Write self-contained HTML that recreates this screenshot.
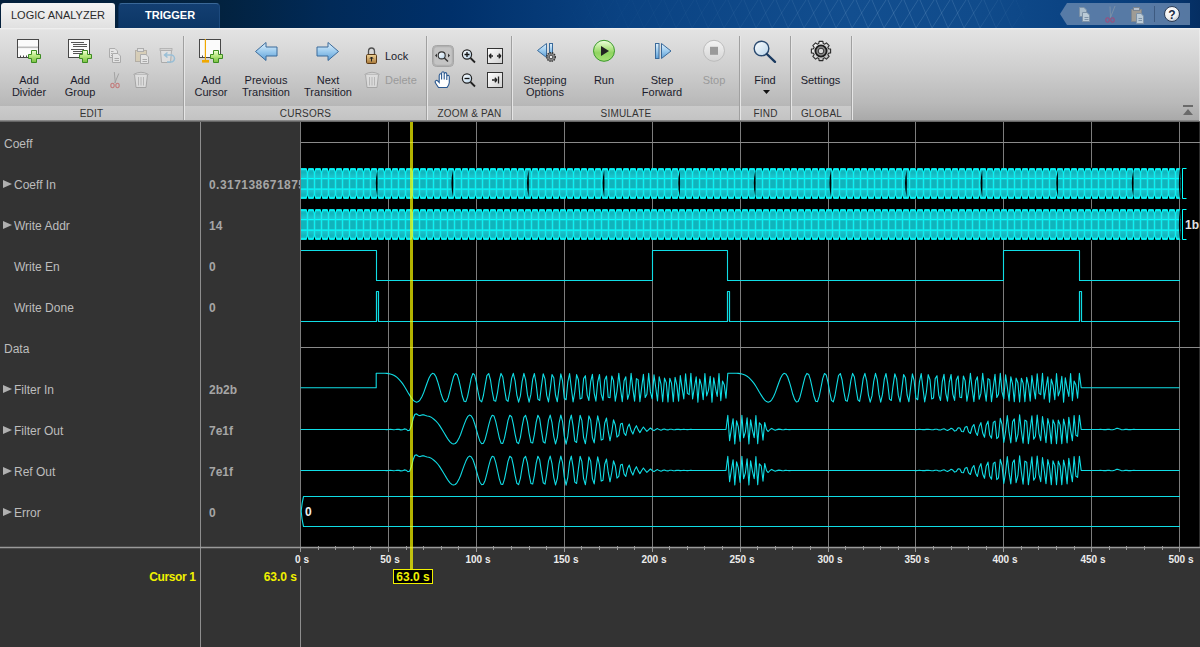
<!DOCTYPE html>
<html><head><meta charset="utf-8">
<style>
*{margin:0;padding:0;box-sizing:border-box}
html,body{width:1200px;height:647px;overflow:hidden;background:#333}
body{position:relative;font-family:"Liberation Sans",sans-serif}
.abs{position:absolute}
#tabbar{position:absolute;left:0;top:0;width:1200px;height:28px;
 background:linear-gradient(90deg,#04203c 0px,#02223f 220px,#012a58 330px,#00306a 450px,#0a4282 620px,#124e8f 850px,#104b8b 980px,#0b4484 1060px,#083c78 1150px,#052e62 1200px)}
#tab1{position:absolute;left:1px;top:3px;width:114px;height:26px;background:linear-gradient(#f4f4f4,#e0e0e0);border-radius:3px 3px 0 0;
 font-size:11px;color:#2a2a2a;line-height:15px;padding:5px 0 0 10px;white-space:nowrap}
#tab2{position:absolute;left:118px;top:3px;width:102px;height:25px;background:linear-gradient(#133f72,#0c3666);border-radius:4px 4px 0 0;border-top:1px solid #3a6898;border-left:1px solid #0a2f5a;border-right:1px solid #1d4a7e;
 font-size:11px;font-weight:bold;color:#fff;line-height:15px;padding:4px 0 0 26px;white-space:nowrap}
#qab{position:absolute;left:1060px;top:3px;width:130px;height:22px}
#strip{position:absolute;left:0;top:28px;width:1200px;height:93px;
 background:linear-gradient(#f2f2f2 0px,#e3e3e3 2px,#cfcfcf 40px,#b9b9b9 75px,#a9a9a9 92px)}
#stripbot{position:absolute;left:0;top:120px;width:1200px;height:2px;background:linear-gradient(#9a9a9a,#555)}
.band{position:absolute;top:106px;height:14px;background:linear-gradient(#cbcbcb,#c3c3c3);
 font-size:10px;letter-spacing:0.2px;color:#333;text-align:center;line-height:14px;padding-top:1px}
.sep{position:absolute;top:36px;width:2px;height:84px;border-left:1px solid #a0a0a0;border-right:1px solid #e6e6e6}
.bt{position:absolute;font-size:11px;color:#1c1c2c;line-height:12px;text-align:center;white-space:nowrap}
.dis{color:#9a9a9a}
#left{position:absolute;left:0;top:122px;width:300px;height:525px;background:#333}
#wave{position:absolute;left:301px;top:122px;width:899px;height:425px;background:#000}
.lbl{position:absolute;font-size:12px;color:#bdbdbd;line-height:16px;white-space:nowrap}
.val{position:absolute;left:209px;width:91px;overflow:hidden;font-size:12px;font-weight:bold;color:#a6a6a6;line-height:16px;white-space:nowrap}
.tri{position:absolute;left:3px;width:0;height:0;border-left:9px solid #b0b0b0;border-top:4.5px solid transparent;border-bottom:4.5px solid transparent}
.tl{position:absolute;top:553px;width:60px;text-align:center;font-size:10px;font-weight:bold;color:#ececec;line-height:13px}
</style></head>
<body>
<div id="tabbar"></div>
<svg class="abs" style="left:0;top:0" width="1200" height="28">
<defs><linearGradient id="meshfade" x1="0" y1="0" x2="1" y2="0">
<stop offset="0.45" stop-color="#fff" stop-opacity="0"/>
<stop offset="0.6" stop-color="#fff" stop-opacity="0.3"/>
<stop offset="0.74" stop-color="#fff" stop-opacity="1"/>
<stop offset="0.8" stop-color="#fff" stop-opacity="0.9"/>
<stop offset="0.86" stop-color="#fff" stop-opacity="0"/>
</linearGradient>
<mask id="mm"><rect x="0" y="0" width="1200" height="28" fill="url(#meshfade)"/></mask></defs>
<g stroke="#8fb4dc" stroke-opacity="0.22" stroke-width="1" mask="url(#mm)">
<line x1="340.0" y1="28" x2="358.0" y2="0"/>
<line x1="340.0" y1="28" x2="328.0" y2="0"/>
<line x1="356.0" y1="28" x2="374.0" y2="0"/>
<line x1="356.0" y1="28" x2="344.0" y2="0"/>
<line x1="372.0" y1="28" x2="390.0" y2="0"/>
<line x1="372.0" y1="28" x2="360.0" y2="0"/>
<line x1="388.0" y1="28" x2="406.0" y2="0"/>
<line x1="388.0" y1="28" x2="376.0" y2="0"/>
<line x1="404.0" y1="28" x2="422.0" y2="0"/>
<line x1="404.0" y1="28" x2="392.0" y2="0"/>
<line x1="420.0" y1="28" x2="438.0" y2="0"/>
<line x1="420.0" y1="28" x2="408.0" y2="0"/>
<line x1="436.0" y1="28" x2="454.0" y2="0"/>
<line x1="436.0" y1="28" x2="424.0" y2="0"/>
<line x1="452.0" y1="28" x2="470.0" y2="0"/>
<line x1="452.0" y1="28" x2="440.0" y2="0"/>
<line x1="468.0" y1="28" x2="486.0" y2="0"/>
<line x1="468.0" y1="28" x2="456.0" y2="0"/>
<line x1="484.0" y1="28" x2="502.0" y2="0"/>
<line x1="484.0" y1="28" x2="472.0" y2="0"/>
<line x1="500.0" y1="28" x2="518.0" y2="0"/>
<line x1="500.0" y1="28" x2="488.0" y2="0"/>
<line x1="516.0" y1="28" x2="534.0" y2="0"/>
<line x1="516.0" y1="28" x2="504.0" y2="0"/>
<line x1="532.0" y1="28" x2="550.0" y2="0"/>
<line x1="532.0" y1="28" x2="520.0" y2="0"/>
<line x1="548.0" y1="28" x2="566.0" y2="0"/>
<line x1="548.0" y1="28" x2="536.0" y2="0"/>
<line x1="564.0" y1="28" x2="582.0" y2="0"/>
<line x1="564.0" y1="28" x2="552.0" y2="0"/>
<line x1="580.0" y1="28" x2="598.0" y2="0"/>
<line x1="580.0" y1="28" x2="568.0" y2="0"/>
<line x1="596.0" y1="28" x2="614.0" y2="0"/>
<line x1="596.0" y1="28" x2="584.0" y2="0"/>
<line x1="612.0" y1="28" x2="630.0" y2="0"/>
<line x1="612.0" y1="28" x2="600.0" y2="0"/>
<line x1="628.0" y1="28" x2="646.0" y2="0"/>
<line x1="628.0" y1="28" x2="616.0" y2="0"/>
<line x1="644.0" y1="28" x2="662.0" y2="0"/>
<line x1="644.0" y1="28" x2="632.0" y2="0"/>
<line x1="660.0" y1="28" x2="678.0" y2="0"/>
<line x1="660.0" y1="28" x2="648.0" y2="0"/>
<line x1="676.0" y1="28" x2="694.0" y2="0"/>
<line x1="676.0" y1="28" x2="664.0" y2="0"/>
<line x1="692.0" y1="28" x2="710.0" y2="0"/>
<line x1="692.0" y1="28" x2="680.0" y2="0"/>
<line x1="708.0" y1="28" x2="726.0" y2="0"/>
<line x1="708.0" y1="28" x2="696.0" y2="0"/>
<line x1="724.0" y1="28" x2="742.0" y2="0"/>
<line x1="724.0" y1="28" x2="712.0" y2="0"/>
<line x1="740.0" y1="28" x2="758.0" y2="0"/>
<line x1="740.0" y1="28" x2="728.0" y2="0"/>
<line x1="756.0" y1="28" x2="774.0" y2="0"/>
<line x1="756.0" y1="28" x2="744.0" y2="0"/>
<line x1="772.0" y1="28" x2="790.0" y2="0"/>
<line x1="772.0" y1="28" x2="760.0" y2="0"/>
<line x1="788.0" y1="28" x2="806.0" y2="0"/>
<line x1="788.0" y1="28" x2="776.0" y2="0"/>
<line x1="804.0" y1="28" x2="822.0" y2="0"/>
<line x1="804.0" y1="28" x2="792.0" y2="0"/>
<line x1="820.0" y1="28" x2="838.0" y2="0"/>
<line x1="820.0" y1="28" x2="808.0" y2="0"/>
<line x1="836.0" y1="28" x2="854.0" y2="0"/>
<line x1="836.0" y1="28" x2="824.0" y2="0"/>
<line x1="852.0" y1="28" x2="870.0" y2="0"/>
<line x1="852.0" y1="28" x2="840.0" y2="0"/>
<line x1="868.0" y1="28" x2="886.0" y2="0"/>
<line x1="868.0" y1="28" x2="856.0" y2="0"/>
<line x1="884.0" y1="28" x2="902.0" y2="0"/>
<line x1="884.0" y1="28" x2="872.0" y2="0"/>
<line x1="900.0" y1="28" x2="918.0" y2="0"/>
<line x1="900.0" y1="28" x2="888.0" y2="0"/>
<line x1="916.0" y1="28" x2="934.0" y2="0"/>
<line x1="916.0" y1="28" x2="904.0" y2="0"/>
<line x1="932.0" y1="28" x2="950.0" y2="0"/>
<line x1="932.0" y1="28" x2="920.0" y2="0"/>
<line x1="948.0" y1="28" x2="966.0" y2="0"/>
<line x1="948.0" y1="28" x2="936.0" y2="0"/>
<line x1="964.0" y1="28" x2="982.0" y2="0"/>
<line x1="964.0" y1="28" x2="952.0" y2="0"/>
<line x1="980.0" y1="28" x2="998.0" y2="0"/>
<line x1="980.0" y1="28" x2="968.0" y2="0"/>
<line x1="996.0" y1="28" x2="1014.0" y2="0"/>
<line x1="996.0" y1="28" x2="984.0" y2="0"/>
<line x1="1012.0" y1="28" x2="1030.0" y2="0"/>
<line x1="1012.0" y1="28" x2="1000.0" y2="0"/>
<line x1="1028.0" y1="28" x2="1046.0" y2="0"/>
<line x1="1028.0" y1="28" x2="1016.0" y2="0"/>
<line x1="1044.0" y1="28" x2="1062.0" y2="0"/>
<line x1="1044.0" y1="28" x2="1032.0" y2="0"/>
<line x1="1060.0" y1="28" x2="1078.0" y2="0"/>
<line x1="1060.0" y1="28" x2="1048.0" y2="0"/>
<line x1="1076.0" y1="28" x2="1094.0" y2="0"/>
<line x1="1076.0" y1="28" x2="1064.0" y2="0"/>
<line x1="1092.0" y1="28" x2="1110.0" y2="0"/>
<line x1="1092.0" y1="28" x2="1080.0" y2="0"/>
<line x1="1108.0" y1="28" x2="1126.0" y2="0"/>
<line x1="1108.0" y1="28" x2="1096.0" y2="0"/>
<line x1="1124.0" y1="28" x2="1142.0" y2="0"/>
<line x1="1124.0" y1="28" x2="1112.0" y2="0"/>
<line x1="1140.0" y1="28" x2="1158.0" y2="0"/>
<line x1="1140.0" y1="28" x2="1128.0" y2="0"/>
<line x1="1156.0" y1="28" x2="1174.0" y2="0"/>
<line x1="1156.0" y1="28" x2="1144.0" y2="0"/>
<line x1="1172.0" y1="28" x2="1190.0" y2="0"/>
<line x1="1172.0" y1="28" x2="1160.0" y2="0"/>
<line x1="1188.0" y1="28" x2="1206.0" y2="0"/>
<line x1="1188.0" y1="28" x2="1176.0" y2="0"/>
<line x1="1204.0" y1="28" x2="1222.0" y2="0"/>
<line x1="1204.0" y1="28" x2="1192.0" y2="0"/>
<line x1="1220.0" y1="28" x2="1238.0" y2="0"/>
<line x1="1220.0" y1="28" x2="1208.0" y2="0"/>
<line x1="1236.0" y1="28" x2="1254.0" y2="0"/>
<line x1="1236.0" y1="28" x2="1224.0" y2="0"/>
<line x1="1252.0" y1="28" x2="1270.0" y2="0"/>
<line x1="1252.0" y1="28" x2="1240.0" y2="0"/>
<line x1="1268.0" y1="28" x2="1286.0" y2="0"/>
<line x1="1268.0" y1="28" x2="1256.0" y2="0"/>
<line x1="1284.0" y1="28" x2="1302.0" y2="0"/>
<line x1="1284.0" y1="28" x2="1272.0" y2="0"/>
<line x1="1300.0" y1="28" x2="1318.0" y2="0"/>
<line x1="1300.0" y1="28" x2="1288.0" y2="0"/>
<line x1="1316.0" y1="28" x2="1334.0" y2="0"/>
<line x1="1316.0" y1="28" x2="1304.0" y2="0"/>
<line x1="1332.0" y1="28" x2="1350.0" y2="0"/>
<line x1="1332.0" y1="28" x2="1320.0" y2="0"/>
<line x1="1348.0" y1="28" x2="1366.0" y2="0"/>
<line x1="1348.0" y1="28" x2="1336.0" y2="0"/>
<line x1="1364.0" y1="28" x2="1382.0" y2="0"/>
<line x1="1364.0" y1="28" x2="1352.0" y2="0"/>
<line x1="1380.0" y1="28" x2="1398.0" y2="0"/>
<line x1="1380.0" y1="28" x2="1368.0" y2="0"/>
<line x1="1396.0" y1="28" x2="1414.0" y2="0"/>
<line x1="1396.0" y1="28" x2="1384.0" y2="0"/>
<line x1="1412.0" y1="28" x2="1430.0" y2="0"/>
<line x1="1412.0" y1="28" x2="1400.0" y2="0"/>
<line x1="1428.0" y1="28" x2="1446.0" y2="0"/>
<line x1="1428.0" y1="28" x2="1416.0" y2="0"/>
<line x1="1444.0" y1="28" x2="1462.0" y2="0"/>
<line x1="1444.0" y1="28" x2="1432.0" y2="0"/>
</g></svg>
<div id="tab1">LOGIC ANALYZER</div>
<div id="tab2">TRIGGER</div>
<div id="qab">
<svg width="130" height="22" viewBox="0 0 130 22">
<path d="M7,0 H130 V22 H7 L0,11 Z" fill="#6585ad" fill-opacity="0.85"/>
<line x1="94.5" y1="3" x2="94.5" y2="19" stroke="#3d5a80" stroke-width="1"/>
<g opacity="0.75">
<path d="M19.5,4.5 H24 L26.5,7 V13.5 H19.5 Z" fill="#c8d4d8" stroke="#8a9aa8"/>
<path d="M22.5,9.5 H27 L29.5,12 V18.5 H22.5 Z" fill="#dde6e8" stroke="#8a9aa8"/>
<path d="M24.5,14.5 H28.5 M24.5,16.5 H28.5" stroke="#8a9aa8"/>
<path d="M55,3 L50.5,14.5 M50,3.5 L50.5,14.5" stroke="#8a9aa8" stroke-width="0.9"/>
<ellipse cx="47.5" cy="17" rx="1.7" ry="2.2" fill="none" stroke="#b04070" stroke-width="1.1"/>
<ellipse cx="52.5" cy="17" rx="1.7" ry="2.2" fill="none" stroke="#b04070" stroke-width="1.1"/>
<rect x="71.5" y="6.5" width="10" height="12" fill="#b8a890" stroke="#8a8a8a"/>
<rect x="73.5" y="4.5" width="6" height="3" fill="#d8d8d8" stroke="#8a8a8a"/>
<path d="M76.5,10.5 H81 L83.5,13 V20.5 H76.5 Z" fill="#dde6e8" stroke="#8a9aa8"/>
<path d="M78.5,15.5 H82 M78.5,17.5 H82" stroke="#8a9aa8"/>
</g>
<defs><radialGradient id="ghelp" cx="0.4" cy="0.3" r="0.8"><stop offset="0" stop-color="#ffffff"/><stop offset="0.6" stop-color="#f0f0f0"/><stop offset="1" stop-color="#a8b4c4"/></radialGradient></defs><circle cx="112" cy="11" r="7.5" fill="url(#ghelp)" stroke="#2b3b55" stroke-width="1"/>
<text x="112" y="15.5" font-family="Liberation Sans" font-weight="bold" font-size="12" text-anchor="middle" fill="#1a2a44">?</text>
</svg>
</div>

<div id="strip"></div>
<div id="stripbot"></div>
<div class="abs" style="left:1199px;top:28px;width:1px;height:93px;background:linear-gradient(#eee,#ccc)"></div>
<div class="band" style="left:0;width:183px">EDIT</div>
<div class="band" style="left:185px;width:241px">CURSORS</div>
<div class="band" style="left:428px;width:83px">ZOOM &amp; PAN</div>
<div class="band" style="left:513px;width:226px">SIMULATE</div>
<div class="band" style="left:741px;width:49px">FIND</div>
<div class="band" style="left:792px;width:59px">GLOBAL</div>
<div class="sep" style="left:183px"></div>
<div class="sep" style="left:426px"></div>
<div class="sep" style="left:511px"></div>
<div class="sep" style="left:739px"></div>
<div class="sep" style="left:790px"></div>
<div class="sep" style="left:851px"></div>

<div class="bt" style="left:9px;top:74px;width:40px">Add<br>Divider</div>
<div class="bt" style="left:60px;top:74px;width:40px">Add<br>Group</div>
<div class="bt" style="left:191px;top:74px;width:40px">Add<br>Cursor</div>
<div class="bt" style="left:236px;top:74px;width:60px">Previous<br>Transition</div>
<div class="bt" style="left:298px;top:74px;width:60px">Next<br>Transition</div>
<div class="bt" style="left:385px;top:50px;text-align:left">Lock</div>
<div class="bt dis" style="left:385px;top:74px;text-align:left">Delete</div>
<div class="bt" style="left:515px;top:74px;width:60px">Stepping<br>Options</div>
<div class="bt" style="left:584px;top:74px;width:40px">Run</div>
<div class="bt" style="left:632px;top:74px;width:60px">Step<br>Forward</div>
<div class="bt dis" style="left:694px;top:74px;width:40px">Stop</div>
<div class="bt" style="left:745px;top:74px;width:40px">Find</div>
<div class="bt" style="left:790px;top:74px;width:61px">Settings</div>
<svg class="abs" style="left:0;top:0" width="1200" height="122" viewBox="0 0 1200 122">
<defs>
<linearGradient id="gplus" x1="0" y1="0" x2="0" y2="1"><stop offset="0" stop-color="#f4ffd8"/><stop offset="0.45" stop-color="#b8e880"/><stop offset="1" stop-color="#78c040"/></linearGradient>
<linearGradient id="garrow" x1="0" y1="0" x2="0" y2="1"><stop offset="0" stop-color="#e4f2fc"/><stop offset="0.5" stop-color="#9ccbee"/><stop offset="1" stop-color="#5c9ed6"/></linearGradient>
<linearGradient id="grun" x1="0" y1="0" x2="0" y2="1"><stop offset="0" stop-color="#f0ffe0"/><stop offset="0.35" stop-color="#b8e890"/><stop offset="0.6" stop-color="#90d460"/><stop offset="1" stop-color="#a8e078"/></linearGradient>
<linearGradient id="gstop" x1="0" y1="0" x2="0" y2="1"><stop offset="0" stop-color="#f4f4f4"/><stop offset="1" stop-color="#d4d4d4"/></linearGradient>
<linearGradient id="glock" x1="0" y1="0" x2="0" y2="1"><stop offset="0" stop-color="#f0d498"/><stop offset="1" stop-color="#a87838"/></linearGradient>
<linearGradient id="gsel" x1="0" y1="0" x2="0" y2="1"><stop offset="0" stop-color="#a8a8a8"/><stop offset="1" stop-color="#d8d8d8"/></linearGradient>
<linearGradient id="ggear" x1="0" y1="0" x2="1" y2="1"><stop offset="0" stop-color="#ffffff"/><stop offset="1" stop-color="#b0b0b0"/></linearGradient>
<linearGradient id="gbox" x1="0" y1="0" x2="1" y2="1"><stop offset="0" stop-color="#ffffff"/><stop offset="1" stop-color="#d0d0d0"/></linearGradient>
<linearGradient id="glens" x1="0" y1="0" x2="1" y2="1"><stop offset="0" stop-color="#ffffff"/><stop offset="1" stop-color="#b8d4ea"/></linearGradient>
<g id="plus"><path d="M2.5,0.5 H7.5 V5.5 H12.5 V10.5 H7.5 V12.5 H2.5 V10.5 H0.5 V5.5 H2.5 Z" transform="translate(-0.0,0)" fill="url(#gplus)" stroke="#3c8c22" stroke-width="1"/></g>
</defs>
<!-- EDIT -->
<g>
<rect x="17.5" y="39.5" width="21" height="18" fill="#fbfbfb" stroke="#474747" stroke-width="1"/>
<rect x="18" y="46.5" width="20" height="1.6" fill="#bdbdbd"/>
<path d="M20.5,57.5 V55.5 M23.5,57.5 V55.5 M26.5,57.5 V55.5" stroke="#474747" stroke-width="1"/>
<path d="M31.5,50.5 H36.5 V54.5 H40.5 V58.5 H36.5 V62.5 H31.5 V58.5 H28.5 V54.5 H31.5 Z" fill="url(#gplus)" stroke="#3c8c22" stroke-width="1"/>
</g>
<g>
<rect x="68.5" y="39.5" width="21" height="18" fill="#fbfbfb" stroke="#474747" stroke-width="1"/>
<path d="M71,42.5 H84 M73,44.5 H87 M73,46.5 H87 M71,49.5 H84 M73,51.5 H83 M73,53.5 H83" stroke="#555" stroke-width="1"/>
<path d="M82.5,50.5 H87.5 V54.5 H91.5 V58.5 H87.5 V62.5 H82.5 V58.5 H79.5 V54.5 H82.5 Z" fill="url(#gplus)" stroke="#3c8c22" stroke-width="1"/>
</g>
<g opacity="0.55">
<path d="M109.5,48.5 H115 L117.5,51 V57.5 H109.5 Z" fill="#f2f2f2" stroke="#8a8a8a"/>
<path d="M112.5,53.5 H118 L120.5,56 V62.5 H112.5 Z" fill="#f2f2f2" stroke="#8a8a8a"/>
<path d="M114.5,58.5 H119 M114.5,60.5 H119 M111,51.5 H113.5 M111,53.5 H112 M111,55.5 H112" stroke="#8a8a8a"/>
<rect x="135.5" y="50.5" width="11" height="11" fill="#d8c8a0" stroke="#9a9080"/>
<rect x="137.5" y="48.5" width="6" height="3" fill="#e8e8e8" stroke="#8a8a8a"/>
<path d="M140.5,54.5 H146 L148.5,57 V63.5 H140.5 Z" fill="#f2f2f2" stroke="#8a8a8a"/>
<path d="M142.5,59.5 H147 M142.5,61.5 H147" stroke="#8a8a8a"/>
<path d="M160.5,50.5 H171.5 L170.5,62.5 H161.5 Z" fill="#e8e8e8" stroke="#8a8a8a"/>
<rect x="160" y="48.5" width="12" height="2" fill="#d0d0d0" stroke="#8a8a8a" stroke-width="0.8"/>
<path d="M165,55 H171 A3.5,3.5 0 0 1 171,62 H167 M167.5,52.5 L164.5,55 L167.5,57.5" fill="none" stroke="#6aaed8" stroke-width="1.5"/>
<path d="M114.3,72 L115.3,83 M118.8,73.5 L114.8,83" stroke="#7a7a7a" stroke-width="0.9"/>
<ellipse cx="112.5" cy="85.5" rx="1.7" ry="2.2" fill="none" stroke="#c04040" stroke-width="1.1"/>
<ellipse cx="117.5" cy="85.5" rx="1.7" ry="2.2" fill="none" stroke="#c04040" stroke-width="1.1"/>
<path d="M134.5,74.5 H147.5 L146,87.5 H136 Z" fill="#efefef" stroke="#8a8a8a"/>
<path d="M133.5,74.5 Q141,70 148.5,74.5" fill="#dcdcdc" stroke="#8a8a8a"/>
<path d="M138.5,77 V85.5 M141,77 V85.5 M143.5,77 V85.5" stroke="#a8a8a8"/>
</g>
<!-- CURSORS -->
<g>
<rect x="199.5" y="39.5" width="21" height="18" fill="#fbfbfb" stroke="#474747" stroke-width="1"/>
<path d="M202.5,57.5 V55.5 M214.5,57.5 V55.5" stroke="#474747" stroke-width="1"/>
<rect x="204.8" y="39" width="1.2" height="22" fill="#f0a800"/>
<rect x="202" y="60" width="7" height="2.6" fill="#f0a800"/>
<path d="M213.5,50.5 H218.5 V54.5 H222.5 V58.5 H218.5 V62.5 H213.5 V58.5 H210.5 V54.5 H213.5 Z" fill="url(#gplus)" stroke="#3c8c22" stroke-width="1"/>
</g>
<path d="M255.5,51.5 L266,42.5 V47 H277 V56 H266 V60.5 Z" fill="url(#garrow)" stroke="#3a6a9a" stroke-width="1" stroke-linejoin="round"/>
<path d="M338.5,51.5 L328,42.5 V47 H317 V56 H328 V60.5 Z" fill="url(#garrow)" stroke="#3a6a9a" stroke-width="1" stroke-linejoin="round"/>
<path d="M368.5,54.5 V51.5 A3,3.5 0 0 1 374.5,51.5 V54.5" fill="none" stroke="#505050" stroke-width="1.3"/>
<rect x="366.5" y="54.5" width="10" height="9" rx="1.2" fill="url(#glock)" stroke="#5a3a18" stroke-width="1"/>
<path d="M371.5,57 V61.5 M370,58.5 L371.5,57 L373,58.5" stroke="#222" stroke-width="1"/>
<g opacity="0.5">
<path d="M365.5,74.5 H378.5 L377,87.5 H367 Z" fill="#efefef" stroke="#8a8a8a"/>
<path d="M364.5,74.5 Q372,70 379.5,74.5" fill="#dcdcdc" stroke="#8a8a8a"/>
<path d="M369.5,77 V85.5 M372,77 V85.5 M374.5,77 V85.5" stroke="#a8a8a8"/>
</g>
<!-- ZOOM & PAN -->
<rect x="432.5" y="45.5" width="21" height="21" rx="4" fill="#c4c4c4" stroke="#a0a0a0" stroke-width="1"/>
<rect x="433.5" y="46.5" width="19" height="19" rx="3.2" fill="none" stroke="#b0b0b0" stroke-width="1.5"/>
<circle cx="441.7" cy="55.4" r="3.5" fill="url(#glens)" stroke="#333" stroke-width="1.1"/>
<path d="M444.3,58 L448,61.5" stroke="#333" stroke-width="1.5"/>
<path d="M435,55.5 L437,53.5 V57.5 Z M450,55.5 L448,53.5 V57.5 Z" fill="#333"/>
<circle cx="467" cy="54.5" r="4.6" fill="url(#glens)" stroke="#222" stroke-width="1.2"/>
<path d="M464.5,54.5 H469.5 M467,52 V57" stroke="#111" stroke-width="1.3"/>
<path d="M470.5,58 L475,62.5" stroke="#222" stroke-width="1.8"/>
<circle cx="467" cy="78.5" r="4.6" fill="url(#glens)" stroke="#222" stroke-width="1.2"/>
<path d="M464.5,78.5 H469.5" stroke="#111" stroke-width="1.3"/>
<path d="M470.5,82 L475,86.5" stroke="#222" stroke-width="1.8"/>
<rect x="487.5" y="48.5" width="15" height="15" fill="url(#gbox)" stroke="#333" stroke-width="1"/>
<path d="M489,56 H493 M489,56 L491.3,53.8 M489,56 L491.3,58.2 M501,56 H497 M501,56 L498.7,53.8 M501,56 L498.7,58.2" stroke="#222" stroke-width="1.3"/>
<rect x="487.5" y="72.5" width="15" height="15" fill="url(#gbox)" stroke="#333" stroke-width="1"/>
<path d="M492,80 H497 M497,80 L494.8,77.8 M497,80 L494.8,82.2 M498.5,76.5 V83.5" stroke="#222" stroke-width="1.3"/>
<path d="M438.5,87.5 L435.8,83.5 Q434.5,81.5 435.8,80.6 Q436.8,80 438,81.2 L439.2,82.5 V75.5 Q439.5,73.8 440.6,73.8 Q441.5,73.8 441.6,75.5 V79.5 V73.2 Q442,71.8 443,71.8 Q444,71.8 444.2,73.2 V79.5 V74 Q444.6,72.6 445.6,72.6 Q446.6,72.6 446.8,74 V80 V76.5 Q447.2,75.3 448.2,75.3 Q449.3,75.5 449.3,77 V82.5 Q449,85.5 447,87.5 Z" fill="#fff" stroke="#2a5890" stroke-width="1.1"/>
<!-- SIMULATE -->
<path d="M546.5,43.5 L537.5,50.5 L546.5,57.5 Z" fill="url(#garrow)" stroke="#3a6a9a" stroke-width="1" stroke-linejoin="round"/>
<rect x="549.5" y="43.5" width="3" height="12" fill="url(#garrow)" stroke="#3a6a9a" stroke-width="1"/>
<circle cx="551" cy="57" r="4.3" fill="#888" stroke="#333" stroke-width="1.4" stroke-dasharray="1.4 0.9"/>
<circle cx="551" cy="57" r="1.8" fill="#eee" stroke="#333" stroke-width="0.8"/>
<circle cx="604" cy="50.8" r="10.5" fill="url(#grun)" stroke="#3a9a2a" stroke-width="1"/>
<path d="M601,46 L609,51 L601,56 Z" fill="#222"/>
<rect x="655.5" y="43.5" width="3.5" height="15" fill="url(#garrow)" stroke="#3a6a9a" stroke-width="1"/>
<path d="M661.5,43.5 L671,51 L661.5,58.5 Z" fill="url(#garrow)" stroke="#3a6a9a" stroke-width="1" stroke-linejoin="round"/>
<circle cx="714" cy="50.8" r="10.5" fill="url(#gstop)" stroke="#bcbcbc" stroke-width="1"/>
<rect x="710" y="46.8" width="8" height="8" fill="#9a9a9a"/>
<!-- FIND -->
<circle cx="761.5" cy="48.5" r="7.3" fill="url(#glens)" stroke="#2a4a70" stroke-width="1.4"/>
<path d="M766.8,54 L775,61.8" stroke="#1a3a60" stroke-width="2.4" stroke-linecap="round"/>
<path d="M763,90 H770 L766.5,94 Z" fill="#111"/>
<!-- GLOBAL -->
<path id="gear" d="M819.09,41.39 L822.91,41.39 L823.18,43.51 L824.76,44.16 L826.44,42.85 L829.15,45.56 L827.84,47.24 L828.49,48.82 L830.61,49.09 L830.61,52.91 L828.49,53.18 L827.84,54.76 L829.15,56.44 L826.44,59.15 L824.76,57.84 L823.18,58.49 L822.91,60.61 L819.09,60.61 L818.82,58.49 L817.24,57.84 L815.56,59.15 L812.85,56.44 L814.16,54.76 L813.51,53.18 L811.39,52.91 L811.39,49.09 L813.51,48.82 L814.16,47.24 L812.85,45.56 L815.56,42.85 L817.24,44.16 L818.82,43.51 Z" fill="url(#ggear)" stroke="#2a2a2a" stroke-width="1.1" stroke-linejoin="round"/>
<circle cx="821" cy="51" r="5.6" fill="#8a8a8a" stroke="#1a1a1a" stroke-width="1.8"/>
<circle cx="821" cy="51" r="2.8" fill="#d8d8d8" stroke="#333" stroke-width="1"/>
<path d="M1183,105 H1193 V107 H1183 Z M1183,115 L1188,109 L1193,115 Z" fill="#6a6a6a"/>
</svg>


<div id="left"></div>
<div id="wave"></div>
<svg class="abs" style="left:0;top:0" width="1200" height="647">
<g stroke="#8e8e8e" stroke-width="1">
<line x1="200.5" y1="122" x2="200.5" y2="647"/>
<line x1="300.5" y1="122" x2="300.5" y2="552"/>
<line x1="300.5" y1="566" x2="300.5" y2="647"/>
</g>
<line x1="1199.5" y1="122" x2="1199.5" y2="547" stroke="#2e2e2e"/>
<g stroke="#7c7c7c" stroke-width="1">
<line x1="300.5" y1="122" x2="300.5" y2="547" />
<line x1="388.5" y1="122" x2="388.5" y2="547" />
<line x1="476.5" y1="122" x2="476.5" y2="547" />
<line x1="564.5" y1="122" x2="564.5" y2="547" />
<line x1="652.5" y1="122" x2="652.5" y2="547" />
<line x1="740.5" y1="122" x2="740.5" y2="547" />
<line x1="828.5" y1="122" x2="828.5" y2="547" />
<line x1="915.5" y1="122" x2="915.5" y2="547" />
<line x1="1003.5" y1="122" x2="1003.5" y2="547" />
<line x1="1091.5" y1="122" x2="1091.5" y2="547" />
<line x1="1179.5" y1="122" x2="1179.5" y2="547" />
</g>
<g stroke="#8a8a8a" stroke-width="1">
<line x1="301" y1="142.5" x2="1200" y2="142.5"/>
<line x1="301" y1="347.5" x2="1200" y2="347.5"/>
</g>
<g stroke="#9a9a9a" stroke-width="1.5">
<line x1="0" y1="547.5" x2="1200" y2="547.5"/>
</g>
<g stroke="#9a9a9a" stroke-width="1">
<line x1="300.5" y1="547" x2="300.5" y2="552"/>
<line x1="318.5" y1="546" x2="318.5" y2="550"/>
<line x1="335.5" y1="546" x2="335.5" y2="550"/>
<line x1="353.5" y1="546" x2="353.5" y2="550"/>
<line x1="370.5" y1="546" x2="370.5" y2="550"/>
<line x1="388.5" y1="547" x2="388.5" y2="552"/>
<line x1="406.5" y1="546" x2="406.5" y2="550"/>
<line x1="423.5" y1="546" x2="423.5" y2="550"/>
<line x1="441.5" y1="546" x2="441.5" y2="550"/>
<line x1="458.5" y1="546" x2="458.5" y2="550"/>
<line x1="476.5" y1="547" x2="476.5" y2="552"/>
<line x1="493.5" y1="546" x2="493.5" y2="550"/>
<line x1="511.5" y1="546" x2="511.5" y2="550"/>
<line x1="529.5" y1="546" x2="529.5" y2="550"/>
<line x1="546.5" y1="546" x2="546.5" y2="550"/>
<line x1="564.5" y1="547" x2="564.5" y2="552"/>
<line x1="581.5" y1="546" x2="581.5" y2="550"/>
<line x1="599.5" y1="546" x2="599.5" y2="550"/>
<line x1="617.5" y1="546" x2="617.5" y2="550"/>
<line x1="634.5" y1="546" x2="634.5" y2="550"/>
<line x1="652.5" y1="547" x2="652.5" y2="552"/>
<line x1="669.5" y1="546" x2="669.5" y2="550"/>
<line x1="687.5" y1="546" x2="687.5" y2="550"/>
<line x1="704.5" y1="546" x2="704.5" y2="550"/>
<line x1="722.5" y1="546" x2="722.5" y2="550"/>
<line x1="740.5" y1="547" x2="740.5" y2="552"/>
<line x1="757.5" y1="546" x2="757.5" y2="550"/>
<line x1="775.5" y1="546" x2="775.5" y2="550"/>
<line x1="792.5" y1="546" x2="792.5" y2="550"/>
<line x1="810.5" y1="546" x2="810.5" y2="550"/>
<line x1="828.5" y1="547" x2="828.5" y2="552"/>
<line x1="845.5" y1="546" x2="845.5" y2="550"/>
<line x1="863.5" y1="546" x2="863.5" y2="550"/>
<line x1="880.5" y1="546" x2="880.5" y2="550"/>
<line x1="898.5" y1="546" x2="898.5" y2="550"/>
<line x1="915.5" y1="547" x2="915.5" y2="552"/>
<line x1="933.5" y1="546" x2="933.5" y2="550"/>
<line x1="951.5" y1="546" x2="951.5" y2="550"/>
<line x1="968.5" y1="546" x2="968.5" y2="550"/>
<line x1="986.5" y1="546" x2="986.5" y2="550"/>
<line x1="1003.5" y1="547" x2="1003.5" y2="552"/>
<line x1="1021.5" y1="546" x2="1021.5" y2="550"/>
<line x1="1038.5" y1="546" x2="1038.5" y2="550"/>
<line x1="1056.5" y1="546" x2="1056.5" y2="550"/>
<line x1="1074.5" y1="546" x2="1074.5" y2="550"/>
<line x1="1091.5" y1="547" x2="1091.5" y2="552"/>
<line x1="1109.5" y1="546" x2="1109.5" y2="550"/>
<line x1="1126.5" y1="546" x2="1126.5" y2="550"/>
<line x1="1144.5" y1="546" x2="1144.5" y2="550"/>
<line x1="1162.5" y1="546" x2="1162.5" y2="550"/>
<line x1="1179.5" y1="547" x2="1179.5" y2="552"/>
</g>
<defs>
<linearGradient id="bus1_v" gradientUnits="userSpaceOnUse" x1="0" y1="168.3" x2="0" y2="198.7"><stop offset="0" stop-color="#22d4dc"/><stop offset="0.12" stop-color="#10b4bc"/><stop offset="0.3" stop-color="#1cc8d0"/><stop offset="0.36" stop-color="#10b4bc"/><stop offset="0.64" stop-color="#10b4bc"/><stop offset="0.7" stop-color="#1cc8d0"/><stop offset="0.88" stop-color="#10b4bc"/><stop offset="1" stop-color="#22d4dc"/></linearGradient>
<linearGradient id="bus2_v" gradientUnits="userSpaceOnUse" x1="0" y1="209.3" x2="0" y2="239.7"><stop offset="0" stop-color="#22d4dc"/><stop offset="0.12" stop-color="#10b4bc"/><stop offset="0.3" stop-color="#1cc8d0"/><stop offset="0.36" stop-color="#10b4bc"/><stop offset="0.64" stop-color="#10b4bc"/><stop offset="0.7" stop-color="#1cc8d0"/><stop offset="0.88" stop-color="#10b4bc"/><stop offset="1" stop-color="#22d4dc"/></linearGradient>
</defs>
<rect x="301" y="168.3" width="879.5" height="30.4" fill="url(#bus1_v)"/>
<path d="M301,168.95 H1180.5 M301,178.60 H1180.5 M301,189.10 H1180.5 M301,198.05 H1180.5" stroke="#0ff" stroke-width="1.4"/>
<path d="M307.5,172.8 V194.2 M314.5,172.8 V194.2 M321.5,172.8 V194.2 M328.5,172.8 V194.2 M335.5,172.8 V194.2 M342.5,172.8 V194.2 M349.5,172.8 V194.2 M356.5,172.8 V194.2 M363.5,172.8 V194.2 M370.5,172.8 V194.2 M377.5,172.8 V194.2 M384.5,172.8 V194.2 M391.5,172.8 V194.2 M398.5,172.8 V194.2 M405.5,172.8 V194.2 M412.5,172.8 V194.2 M419.5,172.8 V194.2 M426.5,172.8 V194.2 M433.5,172.8 V194.2 M440.5,172.8 V194.2 M447.5,172.8 V194.2 M454.5,172.8 V194.2 M461.5,172.8 V194.2 M468.5,172.8 V194.2 M475.5,172.8 V194.2 M482.5,172.8 V194.2 M489.5,172.8 V194.2 M496.5,172.8 V194.2 M503.5,172.8 V194.2 M510.5,172.8 V194.2 M517.5,172.8 V194.2 M524.5,172.8 V194.2 M531.5,172.8 V194.2 M538.5,172.8 V194.2 M545.5,172.8 V194.2 M552.5,172.8 V194.2 M559.5,172.8 V194.2 M566.5,172.8 V194.2 M573.5,172.8 V194.2 M580.5,172.8 V194.2 M587.5,172.8 V194.2 M594.5,172.8 V194.2 M601.5,172.8 V194.2 M608.5,172.8 V194.2 M615.5,172.8 V194.2 M622.5,172.8 V194.2 M629.5,172.8 V194.2 M636.5,172.8 V194.2 M643.5,172.8 V194.2 M650.5,172.8 V194.2 M657.5,172.8 V194.2 M664.5,172.8 V194.2 M671.5,172.8 V194.2 M678.5,172.8 V194.2 M685.5,172.8 V194.2 M692.5,172.8 V194.2 M699.5,172.8 V194.2 M706.5,172.8 V194.2 M713.5,172.8 V194.2 M720.5,172.8 V194.2 M727.5,172.8 V194.2 M734.5,172.8 V194.2 M741.5,172.8 V194.2 M748.5,172.8 V194.2 M755.5,172.8 V194.2 M762.5,172.8 V194.2 M769.5,172.8 V194.2 M776.5,172.8 V194.2 M783.5,172.8 V194.2 M790.5,172.8 V194.2 M797.5,172.8 V194.2 M804.5,172.8 V194.2 M811.5,172.8 V194.2 M818.5,172.8 V194.2 M825.5,172.8 V194.2 M832.5,172.8 V194.2 M839.5,172.8 V194.2 M846.5,172.8 V194.2 M853.5,172.8 V194.2 M860.5,172.8 V194.2 M867.5,172.8 V194.2 M874.5,172.8 V194.2 M881.5,172.8 V194.2 M888.5,172.8 V194.2 M895.5,172.8 V194.2 M902.5,172.8 V194.2 M909.5,172.8 V194.2 M916.5,172.8 V194.2 M923.5,172.8 V194.2 M930.5,172.8 V194.2 M937.5,172.8 V194.2 M944.5,172.8 V194.2 M951.5,172.8 V194.2 M958.5,172.8 V194.2 M965.5,172.8 V194.2 M972.5,172.8 V194.2 M979.5,172.8 V194.2 M986.5,172.8 V194.2 M993.5,172.8 V194.2 M1000.5,172.8 V194.2 M1007.5,172.8 V194.2 M1014.5,172.8 V194.2 M1021.5,172.8 V194.2 M1028.5,172.8 V194.2 M1035.5,172.8 V194.2 M1042.5,172.8 V194.2 M1049.5,172.8 V194.2 M1056.5,172.8 V194.2 M1063.5,172.8 V194.2 M1070.5,172.8 V194.2 M1077.5,172.8 V194.2 M1084.5,172.8 V194.2 M1091.5,172.8 V194.2 M1098.5,172.8 V194.2 M1105.5,172.8 V194.2 M1112.5,172.8 V194.2 M1119.5,172.8 V194.2 M1126.5,172.8 V194.2 M1133.5,172.8 V194.2 M1140.5,172.8 V194.2 M1147.5,172.8 V194.2 M1154.5,172.8 V194.2 M1161.5,172.8 V194.2 M1168.5,172.8 V194.2 M1175.5,172.8 V194.2" stroke="#0ff" stroke-width="1"/>
<path d="M307.5,168.3 V198.7 M314.5,168.3 V198.7 M321.5,168.3 V198.7 M328.5,168.3 V198.7 M335.5,168.3 V198.7 M342.5,168.3 V198.7 M349.5,168.3 V198.7 M356.5,168.3 V198.7 M363.5,168.3 V198.7 M370.5,168.3 V198.7 M377.5,168.3 V198.7 M384.5,168.3 V198.7 M391.5,168.3 V198.7 M398.5,168.3 V198.7 M405.5,168.3 V198.7 M412.5,168.3 V198.7 M419.5,168.3 V198.7 M426.5,168.3 V198.7 M433.5,168.3 V198.7 M440.5,168.3 V198.7 M447.5,168.3 V198.7 M454.5,168.3 V198.7 M461.5,168.3 V198.7 M468.5,168.3 V198.7 M475.5,168.3 V198.7 M482.5,168.3 V198.7 M489.5,168.3 V198.7 M496.5,168.3 V198.7 M503.5,168.3 V198.7 M510.5,168.3 V198.7 M517.5,168.3 V198.7 M524.5,168.3 V198.7 M531.5,168.3 V198.7 M538.5,168.3 V198.7 M545.5,168.3 V198.7 M552.5,168.3 V198.7 M559.5,168.3 V198.7 M566.5,168.3 V198.7 M573.5,168.3 V198.7 M580.5,168.3 V198.7 M587.5,168.3 V198.7 M594.5,168.3 V198.7 M601.5,168.3 V198.7 M608.5,168.3 V198.7 M615.5,168.3 V198.7 M622.5,168.3 V198.7 M629.5,168.3 V198.7 M636.5,168.3 V198.7 M643.5,168.3 V198.7 M650.5,168.3 V198.7 M657.5,168.3 V198.7 M664.5,168.3 V198.7 M671.5,168.3 V198.7 M678.5,168.3 V198.7 M685.5,168.3 V198.7 M692.5,168.3 V198.7 M699.5,168.3 V198.7 M706.5,168.3 V198.7 M713.5,168.3 V198.7 M720.5,168.3 V198.7 M727.5,168.3 V198.7 M734.5,168.3 V198.7 M741.5,168.3 V198.7 M748.5,168.3 V198.7 M755.5,168.3 V198.7 M762.5,168.3 V198.7 M769.5,168.3 V198.7 M776.5,168.3 V198.7 M783.5,168.3 V198.7 M790.5,168.3 V198.7 M797.5,168.3 V198.7 M804.5,168.3 V198.7 M811.5,168.3 V198.7 M818.5,168.3 V198.7 M825.5,168.3 V198.7 M832.5,168.3 V198.7 M839.5,168.3 V198.7 M846.5,168.3 V198.7 M853.5,168.3 V198.7 M860.5,168.3 V198.7 M867.5,168.3 V198.7 M874.5,168.3 V198.7 M881.5,168.3 V198.7 M888.5,168.3 V198.7 M895.5,168.3 V198.7 M902.5,168.3 V198.7 M909.5,168.3 V198.7 M916.5,168.3 V198.7 M923.5,168.3 V198.7 M930.5,168.3 V198.7 M937.5,168.3 V198.7 M944.5,168.3 V198.7 M951.5,168.3 V198.7 M958.5,168.3 V198.7 M965.5,168.3 V198.7 M972.5,168.3 V198.7 M979.5,168.3 V198.7 M986.5,168.3 V198.7 M993.5,168.3 V198.7 M1000.5,168.3 V198.7 M1007.5,168.3 V198.7 M1014.5,168.3 V198.7 M1021.5,168.3 V198.7 M1028.5,168.3 V198.7 M1035.5,168.3 V198.7 M1042.5,168.3 V198.7 M1049.5,168.3 V198.7 M1056.5,168.3 V198.7 M1063.5,168.3 V198.7 M1070.5,168.3 V198.7 M1077.5,168.3 V198.7 M1084.5,168.3 V198.7 M1091.5,168.3 V198.7 M1098.5,168.3 V198.7 M1105.5,168.3 V198.7 M1112.5,168.3 V198.7 M1119.5,168.3 V198.7 M1126.5,168.3 V198.7 M1133.5,168.3 V198.7 M1140.5,168.3 V198.7 M1147.5,168.3 V198.7 M1154.5,168.3 V198.7 M1161.5,168.3 V198.7 M1168.5,168.3 V198.7 M1175.5,168.3 V198.7" stroke="#26d6de" stroke-width="3" stroke-opacity="0.35"/>
<path d="M306.5,167.8 L307.5,172.5 L308.5,167.8 Z M306.5,199.2 L307.5,194.5 L308.5,199.2 Z M313.5,167.8 L314.5,172.5 L315.5,167.8 Z M313.5,199.2 L314.5,194.5 L315.5,199.2 Z M320.5,167.8 L321.5,172.5 L322.5,167.8 Z M320.5,199.2 L321.5,194.5 L322.5,199.2 Z M327.5,167.8 L328.5,172.5 L329.5,167.8 Z M327.5,199.2 L328.5,194.5 L329.5,199.2 Z M334.5,167.8 L335.5,172.5 L336.5,167.8 Z M334.5,199.2 L335.5,194.5 L336.5,199.2 Z M341.5,167.8 L342.5,172.5 L343.5,167.8 Z M341.5,199.2 L342.5,194.5 L343.5,199.2 Z M348.5,167.8 L349.5,172.5 L350.5,167.8 Z M348.5,199.2 L349.5,194.5 L350.5,199.2 Z M355.5,167.8 L356.5,172.5 L357.5,167.8 Z M355.5,199.2 L356.5,194.5 L357.5,199.2 Z M362.5,167.8 L363.5,172.5 L364.5,167.8 Z M362.5,199.2 L363.5,194.5 L364.5,199.2 Z M369.5,167.8 L370.5,172.5 L371.5,167.8 Z M369.5,199.2 L370.5,194.5 L371.5,199.2 Z M376.5,167.8 L377.5,172.5 L378.5,167.8 Z M376.5,199.2 L377.5,194.5 L378.5,199.2 Z M383.5,167.8 L384.5,172.5 L385.5,167.8 Z M383.5,199.2 L384.5,194.5 L385.5,199.2 Z M390.5,167.8 L391.5,172.5 L392.5,167.8 Z M390.5,199.2 L391.5,194.5 L392.5,199.2 Z M397.5,167.8 L398.5,172.5 L399.5,167.8 Z M397.5,199.2 L398.5,194.5 L399.5,199.2 Z M404.5,167.8 L405.5,172.5 L406.5,167.8 Z M404.5,199.2 L405.5,194.5 L406.5,199.2 Z M411.5,167.8 L412.5,172.5 L413.5,167.8 Z M411.5,199.2 L412.5,194.5 L413.5,199.2 Z M418.5,167.8 L419.5,172.5 L420.5,167.8 Z M418.5,199.2 L419.5,194.5 L420.5,199.2 Z M425.5,167.8 L426.5,172.5 L427.5,167.8 Z M425.5,199.2 L426.5,194.5 L427.5,199.2 Z M432.5,167.8 L433.5,172.5 L434.5,167.8 Z M432.5,199.2 L433.5,194.5 L434.5,199.2 Z M439.5,167.8 L440.5,172.5 L441.5,167.8 Z M439.5,199.2 L440.5,194.5 L441.5,199.2 Z M446.5,167.8 L447.5,172.5 L448.5,167.8 Z M446.5,199.2 L447.5,194.5 L448.5,199.2 Z M453.5,167.8 L454.5,172.5 L455.5,167.8 Z M453.5,199.2 L454.5,194.5 L455.5,199.2 Z M460.5,167.8 L461.5,172.5 L462.5,167.8 Z M460.5,199.2 L461.5,194.5 L462.5,199.2 Z M467.5,167.8 L468.5,172.5 L469.5,167.8 Z M467.5,199.2 L468.5,194.5 L469.5,199.2 Z M474.5,167.8 L475.5,172.5 L476.5,167.8 Z M474.5,199.2 L475.5,194.5 L476.5,199.2 Z M481.5,167.8 L482.5,172.5 L483.5,167.8 Z M481.5,199.2 L482.5,194.5 L483.5,199.2 Z M488.5,167.8 L489.5,172.5 L490.5,167.8 Z M488.5,199.2 L489.5,194.5 L490.5,199.2 Z M495.5,167.8 L496.5,172.5 L497.5,167.8 Z M495.5,199.2 L496.5,194.5 L497.5,199.2 Z M502.5,167.8 L503.5,172.5 L504.5,167.8 Z M502.5,199.2 L503.5,194.5 L504.5,199.2 Z M509.5,167.8 L510.5,172.5 L511.5,167.8 Z M509.5,199.2 L510.5,194.5 L511.5,199.2 Z M516.5,167.8 L517.5,172.5 L518.5,167.8 Z M516.5,199.2 L517.5,194.5 L518.5,199.2 Z M523.5,167.8 L524.5,172.5 L525.5,167.8 Z M523.5,199.2 L524.5,194.5 L525.5,199.2 Z M530.5,167.8 L531.5,172.5 L532.5,167.8 Z M530.5,199.2 L531.5,194.5 L532.5,199.2 Z M537.5,167.8 L538.5,172.5 L539.5,167.8 Z M537.5,199.2 L538.5,194.5 L539.5,199.2 Z M544.5,167.8 L545.5,172.5 L546.5,167.8 Z M544.5,199.2 L545.5,194.5 L546.5,199.2 Z M551.5,167.8 L552.5,172.5 L553.5,167.8 Z M551.5,199.2 L552.5,194.5 L553.5,199.2 Z M558.5,167.8 L559.5,172.5 L560.5,167.8 Z M558.5,199.2 L559.5,194.5 L560.5,199.2 Z M565.5,167.8 L566.5,172.5 L567.5,167.8 Z M565.5,199.2 L566.5,194.5 L567.5,199.2 Z M572.5,167.8 L573.5,172.5 L574.5,167.8 Z M572.5,199.2 L573.5,194.5 L574.5,199.2 Z M579.5,167.8 L580.5,172.5 L581.5,167.8 Z M579.5,199.2 L580.5,194.5 L581.5,199.2 Z M586.5,167.8 L587.5,172.5 L588.5,167.8 Z M586.5,199.2 L587.5,194.5 L588.5,199.2 Z M593.5,167.8 L594.5,172.5 L595.5,167.8 Z M593.5,199.2 L594.5,194.5 L595.5,199.2 Z M600.5,167.8 L601.5,172.5 L602.5,167.8 Z M600.5,199.2 L601.5,194.5 L602.5,199.2 Z M607.5,167.8 L608.5,172.5 L609.5,167.8 Z M607.5,199.2 L608.5,194.5 L609.5,199.2 Z M614.5,167.8 L615.5,172.5 L616.5,167.8 Z M614.5,199.2 L615.5,194.5 L616.5,199.2 Z M621.5,167.8 L622.5,172.5 L623.5,167.8 Z M621.5,199.2 L622.5,194.5 L623.5,199.2 Z M628.5,167.8 L629.5,172.5 L630.5,167.8 Z M628.5,199.2 L629.5,194.5 L630.5,199.2 Z M635.5,167.8 L636.5,172.5 L637.5,167.8 Z M635.5,199.2 L636.5,194.5 L637.5,199.2 Z M642.5,167.8 L643.5,172.5 L644.5,167.8 Z M642.5,199.2 L643.5,194.5 L644.5,199.2 Z M649.5,167.8 L650.5,172.5 L651.5,167.8 Z M649.5,199.2 L650.5,194.5 L651.5,199.2 Z M656.5,167.8 L657.5,172.5 L658.5,167.8 Z M656.5,199.2 L657.5,194.5 L658.5,199.2 Z M663.5,167.8 L664.5,172.5 L665.5,167.8 Z M663.5,199.2 L664.5,194.5 L665.5,199.2 Z M670.5,167.8 L671.5,172.5 L672.5,167.8 Z M670.5,199.2 L671.5,194.5 L672.5,199.2 Z M677.5,167.8 L678.5,172.5 L679.5,167.8 Z M677.5,199.2 L678.5,194.5 L679.5,199.2 Z M684.5,167.8 L685.5,172.5 L686.5,167.8 Z M684.5,199.2 L685.5,194.5 L686.5,199.2 Z M691.5,167.8 L692.5,172.5 L693.5,167.8 Z M691.5,199.2 L692.5,194.5 L693.5,199.2 Z M698.5,167.8 L699.5,172.5 L700.5,167.8 Z M698.5,199.2 L699.5,194.5 L700.5,199.2 Z M705.5,167.8 L706.5,172.5 L707.5,167.8 Z M705.5,199.2 L706.5,194.5 L707.5,199.2 Z M712.5,167.8 L713.5,172.5 L714.5,167.8 Z M712.5,199.2 L713.5,194.5 L714.5,199.2 Z M719.5,167.8 L720.5,172.5 L721.5,167.8 Z M719.5,199.2 L720.5,194.5 L721.5,199.2 Z M726.5,167.8 L727.5,172.5 L728.5,167.8 Z M726.5,199.2 L727.5,194.5 L728.5,199.2 Z M733.5,167.8 L734.5,172.5 L735.5,167.8 Z M733.5,199.2 L734.5,194.5 L735.5,199.2 Z M740.5,167.8 L741.5,172.5 L742.5,167.8 Z M740.5,199.2 L741.5,194.5 L742.5,199.2 Z M747.5,167.8 L748.5,172.5 L749.5,167.8 Z M747.5,199.2 L748.5,194.5 L749.5,199.2 Z M754.5,167.8 L755.5,172.5 L756.5,167.8 Z M754.5,199.2 L755.5,194.5 L756.5,199.2 Z M761.5,167.8 L762.5,172.5 L763.5,167.8 Z M761.5,199.2 L762.5,194.5 L763.5,199.2 Z M768.5,167.8 L769.5,172.5 L770.5,167.8 Z M768.5,199.2 L769.5,194.5 L770.5,199.2 Z M775.5,167.8 L776.5,172.5 L777.5,167.8 Z M775.5,199.2 L776.5,194.5 L777.5,199.2 Z M782.5,167.8 L783.5,172.5 L784.5,167.8 Z M782.5,199.2 L783.5,194.5 L784.5,199.2 Z M789.5,167.8 L790.5,172.5 L791.5,167.8 Z M789.5,199.2 L790.5,194.5 L791.5,199.2 Z M796.5,167.8 L797.5,172.5 L798.5,167.8 Z M796.5,199.2 L797.5,194.5 L798.5,199.2 Z M803.5,167.8 L804.5,172.5 L805.5,167.8 Z M803.5,199.2 L804.5,194.5 L805.5,199.2 Z M810.5,167.8 L811.5,172.5 L812.5,167.8 Z M810.5,199.2 L811.5,194.5 L812.5,199.2 Z M817.5,167.8 L818.5,172.5 L819.5,167.8 Z M817.5,199.2 L818.5,194.5 L819.5,199.2 Z M824.5,167.8 L825.5,172.5 L826.5,167.8 Z M824.5,199.2 L825.5,194.5 L826.5,199.2 Z M831.5,167.8 L832.5,172.5 L833.5,167.8 Z M831.5,199.2 L832.5,194.5 L833.5,199.2 Z M838.5,167.8 L839.5,172.5 L840.5,167.8 Z M838.5,199.2 L839.5,194.5 L840.5,199.2 Z M845.5,167.8 L846.5,172.5 L847.5,167.8 Z M845.5,199.2 L846.5,194.5 L847.5,199.2 Z M852.5,167.8 L853.5,172.5 L854.5,167.8 Z M852.5,199.2 L853.5,194.5 L854.5,199.2 Z M859.5,167.8 L860.5,172.5 L861.5,167.8 Z M859.5,199.2 L860.5,194.5 L861.5,199.2 Z M866.5,167.8 L867.5,172.5 L868.5,167.8 Z M866.5,199.2 L867.5,194.5 L868.5,199.2 Z M873.5,167.8 L874.5,172.5 L875.5,167.8 Z M873.5,199.2 L874.5,194.5 L875.5,199.2 Z M880.5,167.8 L881.5,172.5 L882.5,167.8 Z M880.5,199.2 L881.5,194.5 L882.5,199.2 Z M887.5,167.8 L888.5,172.5 L889.5,167.8 Z M887.5,199.2 L888.5,194.5 L889.5,199.2 Z M894.5,167.8 L895.5,172.5 L896.5,167.8 Z M894.5,199.2 L895.5,194.5 L896.5,199.2 Z M901.5,167.8 L902.5,172.5 L903.5,167.8 Z M901.5,199.2 L902.5,194.5 L903.5,199.2 Z M908.5,167.8 L909.5,172.5 L910.5,167.8 Z M908.5,199.2 L909.5,194.5 L910.5,199.2 Z M915.5,167.8 L916.5,172.5 L917.5,167.8 Z M915.5,199.2 L916.5,194.5 L917.5,199.2 Z M922.5,167.8 L923.5,172.5 L924.5,167.8 Z M922.5,199.2 L923.5,194.5 L924.5,199.2 Z M929.5,167.8 L930.5,172.5 L931.5,167.8 Z M929.5,199.2 L930.5,194.5 L931.5,199.2 Z M936.5,167.8 L937.5,172.5 L938.5,167.8 Z M936.5,199.2 L937.5,194.5 L938.5,199.2 Z M943.5,167.8 L944.5,172.5 L945.5,167.8 Z M943.5,199.2 L944.5,194.5 L945.5,199.2 Z M950.5,167.8 L951.5,172.5 L952.5,167.8 Z M950.5,199.2 L951.5,194.5 L952.5,199.2 Z M957.5,167.8 L958.5,172.5 L959.5,167.8 Z M957.5,199.2 L958.5,194.5 L959.5,199.2 Z M964.5,167.8 L965.5,172.5 L966.5,167.8 Z M964.5,199.2 L965.5,194.5 L966.5,199.2 Z M971.5,167.8 L972.5,172.5 L973.5,167.8 Z M971.5,199.2 L972.5,194.5 L973.5,199.2 Z M978.5,167.8 L979.5,172.5 L980.5,167.8 Z M978.5,199.2 L979.5,194.5 L980.5,199.2 Z M985.5,167.8 L986.5,172.5 L987.5,167.8 Z M985.5,199.2 L986.5,194.5 L987.5,199.2 Z M992.5,167.8 L993.5,172.5 L994.5,167.8 Z M992.5,199.2 L993.5,194.5 L994.5,199.2 Z M999.5,167.8 L1000.5,172.5 L1001.5,167.8 Z M999.5,199.2 L1000.5,194.5 L1001.5,199.2 Z M1006.5,167.8 L1007.5,172.5 L1008.5,167.8 Z M1006.5,199.2 L1007.5,194.5 L1008.5,199.2 Z M1013.5,167.8 L1014.5,172.5 L1015.5,167.8 Z M1013.5,199.2 L1014.5,194.5 L1015.5,199.2 Z M1020.5,167.8 L1021.5,172.5 L1022.5,167.8 Z M1020.5,199.2 L1021.5,194.5 L1022.5,199.2 Z M1027.5,167.8 L1028.5,172.5 L1029.5,167.8 Z M1027.5,199.2 L1028.5,194.5 L1029.5,199.2 Z M1034.5,167.8 L1035.5,172.5 L1036.5,167.8 Z M1034.5,199.2 L1035.5,194.5 L1036.5,199.2 Z M1041.5,167.8 L1042.5,172.5 L1043.5,167.8 Z M1041.5,199.2 L1042.5,194.5 L1043.5,199.2 Z M1048.5,167.8 L1049.5,172.5 L1050.5,167.8 Z M1048.5,199.2 L1049.5,194.5 L1050.5,199.2 Z M1055.5,167.8 L1056.5,172.5 L1057.5,167.8 Z M1055.5,199.2 L1056.5,194.5 L1057.5,199.2 Z M1062.5,167.8 L1063.5,172.5 L1064.5,167.8 Z M1062.5,199.2 L1063.5,194.5 L1064.5,199.2 Z M1069.5,167.8 L1070.5,172.5 L1071.5,167.8 Z M1069.5,199.2 L1070.5,194.5 L1071.5,199.2 Z M1076.5,167.8 L1077.5,172.5 L1078.5,167.8 Z M1076.5,199.2 L1077.5,194.5 L1078.5,199.2 Z M1083.5,167.8 L1084.5,172.5 L1085.5,167.8 Z M1083.5,199.2 L1084.5,194.5 L1085.5,199.2 Z M1090.5,167.8 L1091.5,172.5 L1092.5,167.8 Z M1090.5,199.2 L1091.5,194.5 L1092.5,199.2 Z M1097.5,167.8 L1098.5,172.5 L1099.5,167.8 Z M1097.5,199.2 L1098.5,194.5 L1099.5,199.2 Z M1104.5,167.8 L1105.5,172.5 L1106.5,167.8 Z M1104.5,199.2 L1105.5,194.5 L1106.5,199.2 Z M1111.5,167.8 L1112.5,172.5 L1113.5,167.8 Z M1111.5,199.2 L1112.5,194.5 L1113.5,199.2 Z M1118.5,167.8 L1119.5,172.5 L1120.5,167.8 Z M1118.5,199.2 L1119.5,194.5 L1120.5,199.2 Z M1125.5,167.8 L1126.5,172.5 L1127.5,167.8 Z M1125.5,199.2 L1126.5,194.5 L1127.5,199.2 Z M1132.5,167.8 L1133.5,172.5 L1134.5,167.8 Z M1132.5,199.2 L1133.5,194.5 L1134.5,199.2 Z M1139.5,167.8 L1140.5,172.5 L1141.5,167.8 Z M1139.5,199.2 L1140.5,194.5 L1141.5,199.2 Z M1146.5,167.8 L1147.5,172.5 L1148.5,167.8 Z M1146.5,199.2 L1147.5,194.5 L1148.5,199.2 Z M1153.5,167.8 L1154.5,172.5 L1155.5,167.8 Z M1153.5,199.2 L1154.5,194.5 L1155.5,199.2 Z M1160.5,167.8 L1161.5,172.5 L1162.5,167.8 Z M1160.5,199.2 L1161.5,194.5 L1162.5,199.2 Z M1167.5,167.8 L1168.5,172.5 L1169.5,167.8 Z M1167.5,199.2 L1168.5,194.5 L1169.5,199.2 Z M1174.5,167.8 L1175.5,172.5 L1176.5,167.8 Z M1174.5,199.2 L1175.5,194.5 L1176.5,199.2 Z" fill="#000"/>
<path d="M306.2,168.9 L307.5,172.8 L308.8,168.9 M306.2,198.1 L307.5,194.2 L308.8,198.1 M313.2,168.9 L314.5,172.8 L315.8,168.9 M313.2,198.1 L314.5,194.2 L315.8,198.1 M320.2,168.9 L321.5,172.8 L322.8,168.9 M320.2,198.1 L321.5,194.2 L322.8,198.1 M327.2,168.9 L328.5,172.8 L329.8,168.9 M327.2,198.1 L328.5,194.2 L329.8,198.1 M334.2,168.9 L335.5,172.8 L336.8,168.9 M334.2,198.1 L335.5,194.2 L336.8,198.1 M341.2,168.9 L342.5,172.8 L343.8,168.9 M341.2,198.1 L342.5,194.2 L343.8,198.1 M348.2,168.9 L349.5,172.8 L350.8,168.9 M348.2,198.1 L349.5,194.2 L350.8,198.1 M355.2,168.9 L356.5,172.8 L357.8,168.9 M355.2,198.1 L356.5,194.2 L357.8,198.1 M362.2,168.9 L363.5,172.8 L364.8,168.9 M362.2,198.1 L363.5,194.2 L364.8,198.1 M369.2,168.9 L370.5,172.8 L371.8,168.9 M369.2,198.1 L370.5,194.2 L371.8,198.1 M376.2,168.9 L377.5,172.8 L378.8,168.9 M376.2,198.1 L377.5,194.2 L378.8,198.1 M383.2,168.9 L384.5,172.8 L385.8,168.9 M383.2,198.1 L384.5,194.2 L385.8,198.1 M390.2,168.9 L391.5,172.8 L392.8,168.9 M390.2,198.1 L391.5,194.2 L392.8,198.1 M397.2,168.9 L398.5,172.8 L399.8,168.9 M397.2,198.1 L398.5,194.2 L399.8,198.1 M404.2,168.9 L405.5,172.8 L406.8,168.9 M404.2,198.1 L405.5,194.2 L406.8,198.1 M411.2,168.9 L412.5,172.8 L413.8,168.9 M411.2,198.1 L412.5,194.2 L413.8,198.1 M418.2,168.9 L419.5,172.8 L420.8,168.9 M418.2,198.1 L419.5,194.2 L420.8,198.1 M425.2,168.9 L426.5,172.8 L427.8,168.9 M425.2,198.1 L426.5,194.2 L427.8,198.1 M432.2,168.9 L433.5,172.8 L434.8,168.9 M432.2,198.1 L433.5,194.2 L434.8,198.1 M439.2,168.9 L440.5,172.8 L441.8,168.9 M439.2,198.1 L440.5,194.2 L441.8,198.1 M446.2,168.9 L447.5,172.8 L448.8,168.9 M446.2,198.1 L447.5,194.2 L448.8,198.1 M453.2,168.9 L454.5,172.8 L455.8,168.9 M453.2,198.1 L454.5,194.2 L455.8,198.1 M460.2,168.9 L461.5,172.8 L462.8,168.9 M460.2,198.1 L461.5,194.2 L462.8,198.1 M467.2,168.9 L468.5,172.8 L469.8,168.9 M467.2,198.1 L468.5,194.2 L469.8,198.1 M474.2,168.9 L475.5,172.8 L476.8,168.9 M474.2,198.1 L475.5,194.2 L476.8,198.1 M481.2,168.9 L482.5,172.8 L483.8,168.9 M481.2,198.1 L482.5,194.2 L483.8,198.1 M488.2,168.9 L489.5,172.8 L490.8,168.9 M488.2,198.1 L489.5,194.2 L490.8,198.1 M495.2,168.9 L496.5,172.8 L497.8,168.9 M495.2,198.1 L496.5,194.2 L497.8,198.1 M502.2,168.9 L503.5,172.8 L504.8,168.9 M502.2,198.1 L503.5,194.2 L504.8,198.1 M509.2,168.9 L510.5,172.8 L511.8,168.9 M509.2,198.1 L510.5,194.2 L511.8,198.1 M516.2,168.9 L517.5,172.8 L518.8,168.9 M516.2,198.1 L517.5,194.2 L518.8,198.1 M523.2,168.9 L524.5,172.8 L525.8,168.9 M523.2,198.1 L524.5,194.2 L525.8,198.1 M530.2,168.9 L531.5,172.8 L532.8,168.9 M530.2,198.1 L531.5,194.2 L532.8,198.1 M537.2,168.9 L538.5,172.8 L539.8,168.9 M537.2,198.1 L538.5,194.2 L539.8,198.1 M544.2,168.9 L545.5,172.8 L546.8,168.9 M544.2,198.1 L545.5,194.2 L546.8,198.1 M551.2,168.9 L552.5,172.8 L553.8,168.9 M551.2,198.1 L552.5,194.2 L553.8,198.1 M558.2,168.9 L559.5,172.8 L560.8,168.9 M558.2,198.1 L559.5,194.2 L560.8,198.1 M565.2,168.9 L566.5,172.8 L567.8,168.9 M565.2,198.1 L566.5,194.2 L567.8,198.1 M572.2,168.9 L573.5,172.8 L574.8,168.9 M572.2,198.1 L573.5,194.2 L574.8,198.1 M579.2,168.9 L580.5,172.8 L581.8,168.9 M579.2,198.1 L580.5,194.2 L581.8,198.1 M586.2,168.9 L587.5,172.8 L588.8,168.9 M586.2,198.1 L587.5,194.2 L588.8,198.1 M593.2,168.9 L594.5,172.8 L595.8,168.9 M593.2,198.1 L594.5,194.2 L595.8,198.1 M600.2,168.9 L601.5,172.8 L602.8,168.9 M600.2,198.1 L601.5,194.2 L602.8,198.1 M607.2,168.9 L608.5,172.8 L609.8,168.9 M607.2,198.1 L608.5,194.2 L609.8,198.1 M614.2,168.9 L615.5,172.8 L616.8,168.9 M614.2,198.1 L615.5,194.2 L616.8,198.1 M621.2,168.9 L622.5,172.8 L623.8,168.9 M621.2,198.1 L622.5,194.2 L623.8,198.1 M628.2,168.9 L629.5,172.8 L630.8,168.9 M628.2,198.1 L629.5,194.2 L630.8,198.1 M635.2,168.9 L636.5,172.8 L637.8,168.9 M635.2,198.1 L636.5,194.2 L637.8,198.1 M642.2,168.9 L643.5,172.8 L644.8,168.9 M642.2,198.1 L643.5,194.2 L644.8,198.1 M649.2,168.9 L650.5,172.8 L651.8,168.9 M649.2,198.1 L650.5,194.2 L651.8,198.1 M656.2,168.9 L657.5,172.8 L658.8,168.9 M656.2,198.1 L657.5,194.2 L658.8,198.1 M663.2,168.9 L664.5,172.8 L665.8,168.9 M663.2,198.1 L664.5,194.2 L665.8,198.1 M670.2,168.9 L671.5,172.8 L672.8,168.9 M670.2,198.1 L671.5,194.2 L672.8,198.1 M677.2,168.9 L678.5,172.8 L679.8,168.9 M677.2,198.1 L678.5,194.2 L679.8,198.1 M684.2,168.9 L685.5,172.8 L686.8,168.9 M684.2,198.1 L685.5,194.2 L686.8,198.1 M691.2,168.9 L692.5,172.8 L693.8,168.9 M691.2,198.1 L692.5,194.2 L693.8,198.1 M698.2,168.9 L699.5,172.8 L700.8,168.9 M698.2,198.1 L699.5,194.2 L700.8,198.1 M705.2,168.9 L706.5,172.8 L707.8,168.9 M705.2,198.1 L706.5,194.2 L707.8,198.1 M712.2,168.9 L713.5,172.8 L714.8,168.9 M712.2,198.1 L713.5,194.2 L714.8,198.1 M719.2,168.9 L720.5,172.8 L721.8,168.9 M719.2,198.1 L720.5,194.2 L721.8,198.1 M726.2,168.9 L727.5,172.8 L728.8,168.9 M726.2,198.1 L727.5,194.2 L728.8,198.1 M733.2,168.9 L734.5,172.8 L735.8,168.9 M733.2,198.1 L734.5,194.2 L735.8,198.1 M740.2,168.9 L741.5,172.8 L742.8,168.9 M740.2,198.1 L741.5,194.2 L742.8,198.1 M747.2,168.9 L748.5,172.8 L749.8,168.9 M747.2,198.1 L748.5,194.2 L749.8,198.1 M754.2,168.9 L755.5,172.8 L756.8,168.9 M754.2,198.1 L755.5,194.2 L756.8,198.1 M761.2,168.9 L762.5,172.8 L763.8,168.9 M761.2,198.1 L762.5,194.2 L763.8,198.1 M768.2,168.9 L769.5,172.8 L770.8,168.9 M768.2,198.1 L769.5,194.2 L770.8,198.1 M775.2,168.9 L776.5,172.8 L777.8,168.9 M775.2,198.1 L776.5,194.2 L777.8,198.1 M782.2,168.9 L783.5,172.8 L784.8,168.9 M782.2,198.1 L783.5,194.2 L784.8,198.1 M789.2,168.9 L790.5,172.8 L791.8,168.9 M789.2,198.1 L790.5,194.2 L791.8,198.1 M796.2,168.9 L797.5,172.8 L798.8,168.9 M796.2,198.1 L797.5,194.2 L798.8,198.1 M803.2,168.9 L804.5,172.8 L805.8,168.9 M803.2,198.1 L804.5,194.2 L805.8,198.1 M810.2,168.9 L811.5,172.8 L812.8,168.9 M810.2,198.1 L811.5,194.2 L812.8,198.1 M817.2,168.9 L818.5,172.8 L819.8,168.9 M817.2,198.1 L818.5,194.2 L819.8,198.1 M824.2,168.9 L825.5,172.8 L826.8,168.9 M824.2,198.1 L825.5,194.2 L826.8,198.1 M831.2,168.9 L832.5,172.8 L833.8,168.9 M831.2,198.1 L832.5,194.2 L833.8,198.1 M838.2,168.9 L839.5,172.8 L840.8,168.9 M838.2,198.1 L839.5,194.2 L840.8,198.1 M845.2,168.9 L846.5,172.8 L847.8,168.9 M845.2,198.1 L846.5,194.2 L847.8,198.1 M852.2,168.9 L853.5,172.8 L854.8,168.9 M852.2,198.1 L853.5,194.2 L854.8,198.1 M859.2,168.9 L860.5,172.8 L861.8,168.9 M859.2,198.1 L860.5,194.2 L861.8,198.1 M866.2,168.9 L867.5,172.8 L868.8,168.9 M866.2,198.1 L867.5,194.2 L868.8,198.1 M873.2,168.9 L874.5,172.8 L875.8,168.9 M873.2,198.1 L874.5,194.2 L875.8,198.1 M880.2,168.9 L881.5,172.8 L882.8,168.9 M880.2,198.1 L881.5,194.2 L882.8,198.1 M887.2,168.9 L888.5,172.8 L889.8,168.9 M887.2,198.1 L888.5,194.2 L889.8,198.1 M894.2,168.9 L895.5,172.8 L896.8,168.9 M894.2,198.1 L895.5,194.2 L896.8,198.1 M901.2,168.9 L902.5,172.8 L903.8,168.9 M901.2,198.1 L902.5,194.2 L903.8,198.1 M908.2,168.9 L909.5,172.8 L910.8,168.9 M908.2,198.1 L909.5,194.2 L910.8,198.1 M915.2,168.9 L916.5,172.8 L917.8,168.9 M915.2,198.1 L916.5,194.2 L917.8,198.1 M922.2,168.9 L923.5,172.8 L924.8,168.9 M922.2,198.1 L923.5,194.2 L924.8,198.1 M929.2,168.9 L930.5,172.8 L931.8,168.9 M929.2,198.1 L930.5,194.2 L931.8,198.1 M936.2,168.9 L937.5,172.8 L938.8,168.9 M936.2,198.1 L937.5,194.2 L938.8,198.1 M943.2,168.9 L944.5,172.8 L945.8,168.9 M943.2,198.1 L944.5,194.2 L945.8,198.1 M950.2,168.9 L951.5,172.8 L952.8,168.9 M950.2,198.1 L951.5,194.2 L952.8,198.1 M957.2,168.9 L958.5,172.8 L959.8,168.9 M957.2,198.1 L958.5,194.2 L959.8,198.1 M964.2,168.9 L965.5,172.8 L966.8,168.9 M964.2,198.1 L965.5,194.2 L966.8,198.1 M971.2,168.9 L972.5,172.8 L973.8,168.9 M971.2,198.1 L972.5,194.2 L973.8,198.1 M978.2,168.9 L979.5,172.8 L980.8,168.9 M978.2,198.1 L979.5,194.2 L980.8,198.1 M985.2,168.9 L986.5,172.8 L987.8,168.9 M985.2,198.1 L986.5,194.2 L987.8,198.1 M992.2,168.9 L993.5,172.8 L994.8,168.9 M992.2,198.1 L993.5,194.2 L994.8,198.1 M999.2,168.9 L1000.5,172.8 L1001.8,168.9 M999.2,198.1 L1000.5,194.2 L1001.8,198.1 M1006.2,168.9 L1007.5,172.8 L1008.8,168.9 M1006.2,198.1 L1007.5,194.2 L1008.8,198.1 M1013.2,168.9 L1014.5,172.8 L1015.8,168.9 M1013.2,198.1 L1014.5,194.2 L1015.8,198.1 M1020.2,168.9 L1021.5,172.8 L1022.8,168.9 M1020.2,198.1 L1021.5,194.2 L1022.8,198.1 M1027.2,168.9 L1028.5,172.8 L1029.8,168.9 M1027.2,198.1 L1028.5,194.2 L1029.8,198.1 M1034.2,168.9 L1035.5,172.8 L1036.8,168.9 M1034.2,198.1 L1035.5,194.2 L1036.8,198.1 M1041.2,168.9 L1042.5,172.8 L1043.8,168.9 M1041.2,198.1 L1042.5,194.2 L1043.8,198.1 M1048.2,168.9 L1049.5,172.8 L1050.8,168.9 M1048.2,198.1 L1049.5,194.2 L1050.8,198.1 M1055.2,168.9 L1056.5,172.8 L1057.8,168.9 M1055.2,198.1 L1056.5,194.2 L1057.8,198.1 M1062.2,168.9 L1063.5,172.8 L1064.8,168.9 M1062.2,198.1 L1063.5,194.2 L1064.8,198.1 M1069.2,168.9 L1070.5,172.8 L1071.8,168.9 M1069.2,198.1 L1070.5,194.2 L1071.8,198.1 M1076.2,168.9 L1077.5,172.8 L1078.8,168.9 M1076.2,198.1 L1077.5,194.2 L1078.8,198.1 M1083.2,168.9 L1084.5,172.8 L1085.8,168.9 M1083.2,198.1 L1084.5,194.2 L1085.8,198.1 M1090.2,168.9 L1091.5,172.8 L1092.8,168.9 M1090.2,198.1 L1091.5,194.2 L1092.8,198.1 M1097.2,168.9 L1098.5,172.8 L1099.8,168.9 M1097.2,198.1 L1098.5,194.2 L1099.8,198.1 M1104.2,168.9 L1105.5,172.8 L1106.8,168.9 M1104.2,198.1 L1105.5,194.2 L1106.8,198.1 M1111.2,168.9 L1112.5,172.8 L1113.8,168.9 M1111.2,198.1 L1112.5,194.2 L1113.8,198.1 M1118.2,168.9 L1119.5,172.8 L1120.8,168.9 M1118.2,198.1 L1119.5,194.2 L1120.8,198.1 M1125.2,168.9 L1126.5,172.8 L1127.8,168.9 M1125.2,198.1 L1126.5,194.2 L1127.8,198.1 M1132.2,168.9 L1133.5,172.8 L1134.8,168.9 M1132.2,198.1 L1133.5,194.2 L1134.8,198.1 M1139.2,168.9 L1140.5,172.8 L1141.8,168.9 M1139.2,198.1 L1140.5,194.2 L1141.8,198.1 M1146.2,168.9 L1147.5,172.8 L1148.8,168.9 M1146.2,198.1 L1147.5,194.2 L1148.8,198.1 M1153.2,168.9 L1154.5,172.8 L1155.8,168.9 M1153.2,198.1 L1154.5,194.2 L1155.8,198.1 M1160.2,168.9 L1161.5,172.8 L1162.8,168.9 M1160.2,198.1 L1161.5,194.2 L1162.8,198.1 M1167.2,168.9 L1168.5,172.8 L1169.8,168.9 M1167.2,198.1 L1168.5,194.2 L1169.8,198.1 M1174.2,168.9 L1175.5,172.8 L1176.8,168.9 M1174.2,198.1 L1175.5,194.2 L1176.8,198.1" fill="none" stroke="#0ff" stroke-width="0.9" stroke-linejoin="miter"/>
<path d="M377.4,170.3 Q374.2,183.5 377.4,196.7 Q378.0,183.5 377.4,170.3 Z" fill="#000"/>
<path d="M453.0,170.3 Q449.8,183.5 453.0,196.7 Q453.6,183.5 453.0,170.3 Z" fill="#000"/>
<path d="M528.6,170.3 Q525.4,183.5 528.6,196.7 Q529.2,183.5 528.6,170.3 Z" fill="#000"/>
<path d="M604.2,170.3 Q601.0,183.5 604.2,196.7 Q604.8,183.5 604.2,170.3 Z" fill="#000"/>
<path d="M679.8,170.3 Q676.6,183.5 679.8,196.7 Q680.4,183.5 679.8,170.3 Z" fill="#000"/>
<path d="M755.4,170.3 Q752.2,183.5 755.4,196.7 Q756.0,183.5 755.4,170.3 Z" fill="#000"/>
<path d="M831.0,170.3 Q827.8,183.5 831.0,196.7 Q831.6,183.5 831.0,170.3 Z" fill="#000"/>
<path d="M906.6,170.3 Q903.4,183.5 906.6,196.7 Q907.2,183.5 906.6,170.3 Z" fill="#000"/>
<path d="M982.2,170.3 Q979.0,183.5 982.2,196.7 Q982.8,183.5 982.2,170.3 Z" fill="#000"/>
<path d="M1057.8,170.3 Q1054.6,183.5 1057.8,196.7 Q1058.4,183.5 1057.8,170.3 Z" fill="#000"/>
<path d="M1133.4,170.3 Q1130.2,183.5 1133.4,196.7 Q1134.0,183.5 1133.4,170.3 Z" fill="#000"/>
<path d="M1180.5,168.3 Q1178.5,183.5 1180.5,198.7" fill="none" stroke="#000" stroke-width="1.2"/>
<path d="M1186.5,168.5 H1182.5 V198.5 H1186.5" fill="none" stroke="#00ffff" stroke-width="1"/>
<rect x="301" y="209.3" width="879.5" height="30.4" fill="url(#bus2_v)"/>
<path d="M301,209.95 H1180.5 M301,219.60 H1180.5 M301,230.10 H1180.5 M301,239.05 H1180.5" stroke="#0ff" stroke-width="1.4"/>
<path d="M307.5,213.8 V235.2 M314.5,213.8 V235.2 M321.5,213.8 V235.2 M328.5,213.8 V235.2 M335.5,213.8 V235.2 M342.5,213.8 V235.2 M349.5,213.8 V235.2 M356.5,213.8 V235.2 M363.5,213.8 V235.2 M370.5,213.8 V235.2 M377.5,213.8 V235.2 M384.5,213.8 V235.2 M391.5,213.8 V235.2 M398.5,213.8 V235.2 M405.5,213.8 V235.2 M412.5,213.8 V235.2 M419.5,213.8 V235.2 M426.5,213.8 V235.2 M433.5,213.8 V235.2 M440.5,213.8 V235.2 M447.5,213.8 V235.2 M454.5,213.8 V235.2 M461.5,213.8 V235.2 M468.5,213.8 V235.2 M475.5,213.8 V235.2 M482.5,213.8 V235.2 M489.5,213.8 V235.2 M496.5,213.8 V235.2 M503.5,213.8 V235.2 M510.5,213.8 V235.2 M517.5,213.8 V235.2 M524.5,213.8 V235.2 M531.5,213.8 V235.2 M538.5,213.8 V235.2 M545.5,213.8 V235.2 M552.5,213.8 V235.2 M559.5,213.8 V235.2 M566.5,213.8 V235.2 M573.5,213.8 V235.2 M580.5,213.8 V235.2 M587.5,213.8 V235.2 M594.5,213.8 V235.2 M601.5,213.8 V235.2 M608.5,213.8 V235.2 M615.5,213.8 V235.2 M622.5,213.8 V235.2 M629.5,213.8 V235.2 M636.5,213.8 V235.2 M643.5,213.8 V235.2 M650.5,213.8 V235.2 M657.5,213.8 V235.2 M664.5,213.8 V235.2 M671.5,213.8 V235.2 M678.5,213.8 V235.2 M685.5,213.8 V235.2 M692.5,213.8 V235.2 M699.5,213.8 V235.2 M706.5,213.8 V235.2 M713.5,213.8 V235.2 M720.5,213.8 V235.2 M727.5,213.8 V235.2 M734.5,213.8 V235.2 M741.5,213.8 V235.2 M748.5,213.8 V235.2 M755.5,213.8 V235.2 M762.5,213.8 V235.2 M769.5,213.8 V235.2 M776.5,213.8 V235.2 M783.5,213.8 V235.2 M790.5,213.8 V235.2 M797.5,213.8 V235.2 M804.5,213.8 V235.2 M811.5,213.8 V235.2 M818.5,213.8 V235.2 M825.5,213.8 V235.2 M832.5,213.8 V235.2 M839.5,213.8 V235.2 M846.5,213.8 V235.2 M853.5,213.8 V235.2 M860.5,213.8 V235.2 M867.5,213.8 V235.2 M874.5,213.8 V235.2 M881.5,213.8 V235.2 M888.5,213.8 V235.2 M895.5,213.8 V235.2 M902.5,213.8 V235.2 M909.5,213.8 V235.2 M916.5,213.8 V235.2 M923.5,213.8 V235.2 M930.5,213.8 V235.2 M937.5,213.8 V235.2 M944.5,213.8 V235.2 M951.5,213.8 V235.2 M958.5,213.8 V235.2 M965.5,213.8 V235.2 M972.5,213.8 V235.2 M979.5,213.8 V235.2 M986.5,213.8 V235.2 M993.5,213.8 V235.2 M1000.5,213.8 V235.2 M1007.5,213.8 V235.2 M1014.5,213.8 V235.2 M1021.5,213.8 V235.2 M1028.5,213.8 V235.2 M1035.5,213.8 V235.2 M1042.5,213.8 V235.2 M1049.5,213.8 V235.2 M1056.5,213.8 V235.2 M1063.5,213.8 V235.2 M1070.5,213.8 V235.2 M1077.5,213.8 V235.2 M1084.5,213.8 V235.2 M1091.5,213.8 V235.2 M1098.5,213.8 V235.2 M1105.5,213.8 V235.2 M1112.5,213.8 V235.2 M1119.5,213.8 V235.2 M1126.5,213.8 V235.2 M1133.5,213.8 V235.2 M1140.5,213.8 V235.2 M1147.5,213.8 V235.2 M1154.5,213.8 V235.2 M1161.5,213.8 V235.2 M1168.5,213.8 V235.2 M1175.5,213.8 V235.2" stroke="#0ff" stroke-width="1"/>
<path d="M307.5,209.3 V239.7 M314.5,209.3 V239.7 M321.5,209.3 V239.7 M328.5,209.3 V239.7 M335.5,209.3 V239.7 M342.5,209.3 V239.7 M349.5,209.3 V239.7 M356.5,209.3 V239.7 M363.5,209.3 V239.7 M370.5,209.3 V239.7 M377.5,209.3 V239.7 M384.5,209.3 V239.7 M391.5,209.3 V239.7 M398.5,209.3 V239.7 M405.5,209.3 V239.7 M412.5,209.3 V239.7 M419.5,209.3 V239.7 M426.5,209.3 V239.7 M433.5,209.3 V239.7 M440.5,209.3 V239.7 M447.5,209.3 V239.7 M454.5,209.3 V239.7 M461.5,209.3 V239.7 M468.5,209.3 V239.7 M475.5,209.3 V239.7 M482.5,209.3 V239.7 M489.5,209.3 V239.7 M496.5,209.3 V239.7 M503.5,209.3 V239.7 M510.5,209.3 V239.7 M517.5,209.3 V239.7 M524.5,209.3 V239.7 M531.5,209.3 V239.7 M538.5,209.3 V239.7 M545.5,209.3 V239.7 M552.5,209.3 V239.7 M559.5,209.3 V239.7 M566.5,209.3 V239.7 M573.5,209.3 V239.7 M580.5,209.3 V239.7 M587.5,209.3 V239.7 M594.5,209.3 V239.7 M601.5,209.3 V239.7 M608.5,209.3 V239.7 M615.5,209.3 V239.7 M622.5,209.3 V239.7 M629.5,209.3 V239.7 M636.5,209.3 V239.7 M643.5,209.3 V239.7 M650.5,209.3 V239.7 M657.5,209.3 V239.7 M664.5,209.3 V239.7 M671.5,209.3 V239.7 M678.5,209.3 V239.7 M685.5,209.3 V239.7 M692.5,209.3 V239.7 M699.5,209.3 V239.7 M706.5,209.3 V239.7 M713.5,209.3 V239.7 M720.5,209.3 V239.7 M727.5,209.3 V239.7 M734.5,209.3 V239.7 M741.5,209.3 V239.7 M748.5,209.3 V239.7 M755.5,209.3 V239.7 M762.5,209.3 V239.7 M769.5,209.3 V239.7 M776.5,209.3 V239.7 M783.5,209.3 V239.7 M790.5,209.3 V239.7 M797.5,209.3 V239.7 M804.5,209.3 V239.7 M811.5,209.3 V239.7 M818.5,209.3 V239.7 M825.5,209.3 V239.7 M832.5,209.3 V239.7 M839.5,209.3 V239.7 M846.5,209.3 V239.7 M853.5,209.3 V239.7 M860.5,209.3 V239.7 M867.5,209.3 V239.7 M874.5,209.3 V239.7 M881.5,209.3 V239.7 M888.5,209.3 V239.7 M895.5,209.3 V239.7 M902.5,209.3 V239.7 M909.5,209.3 V239.7 M916.5,209.3 V239.7 M923.5,209.3 V239.7 M930.5,209.3 V239.7 M937.5,209.3 V239.7 M944.5,209.3 V239.7 M951.5,209.3 V239.7 M958.5,209.3 V239.7 M965.5,209.3 V239.7 M972.5,209.3 V239.7 M979.5,209.3 V239.7 M986.5,209.3 V239.7 M993.5,209.3 V239.7 M1000.5,209.3 V239.7 M1007.5,209.3 V239.7 M1014.5,209.3 V239.7 M1021.5,209.3 V239.7 M1028.5,209.3 V239.7 M1035.5,209.3 V239.7 M1042.5,209.3 V239.7 M1049.5,209.3 V239.7 M1056.5,209.3 V239.7 M1063.5,209.3 V239.7 M1070.5,209.3 V239.7 M1077.5,209.3 V239.7 M1084.5,209.3 V239.7 M1091.5,209.3 V239.7 M1098.5,209.3 V239.7 M1105.5,209.3 V239.7 M1112.5,209.3 V239.7 M1119.5,209.3 V239.7 M1126.5,209.3 V239.7 M1133.5,209.3 V239.7 M1140.5,209.3 V239.7 M1147.5,209.3 V239.7 M1154.5,209.3 V239.7 M1161.5,209.3 V239.7 M1168.5,209.3 V239.7 M1175.5,209.3 V239.7" stroke="#26d6de" stroke-width="3" stroke-opacity="0.35"/>
<path d="M306.5,208.8 L307.5,213.5 L308.5,208.8 Z M306.5,240.2 L307.5,235.5 L308.5,240.2 Z M313.5,208.8 L314.5,213.5 L315.5,208.8 Z M313.5,240.2 L314.5,235.5 L315.5,240.2 Z M320.5,208.8 L321.5,213.5 L322.5,208.8 Z M320.5,240.2 L321.5,235.5 L322.5,240.2 Z M327.5,208.8 L328.5,213.5 L329.5,208.8 Z M327.5,240.2 L328.5,235.5 L329.5,240.2 Z M334.5,208.8 L335.5,213.5 L336.5,208.8 Z M334.5,240.2 L335.5,235.5 L336.5,240.2 Z M341.5,208.8 L342.5,213.5 L343.5,208.8 Z M341.5,240.2 L342.5,235.5 L343.5,240.2 Z M348.5,208.8 L349.5,213.5 L350.5,208.8 Z M348.5,240.2 L349.5,235.5 L350.5,240.2 Z M355.5,208.8 L356.5,213.5 L357.5,208.8 Z M355.5,240.2 L356.5,235.5 L357.5,240.2 Z M362.5,208.8 L363.5,213.5 L364.5,208.8 Z M362.5,240.2 L363.5,235.5 L364.5,240.2 Z M369.5,208.8 L370.5,213.5 L371.5,208.8 Z M369.5,240.2 L370.5,235.5 L371.5,240.2 Z M376.5,208.8 L377.5,213.5 L378.5,208.8 Z M376.5,240.2 L377.5,235.5 L378.5,240.2 Z M383.5,208.8 L384.5,213.5 L385.5,208.8 Z M383.5,240.2 L384.5,235.5 L385.5,240.2 Z M390.5,208.8 L391.5,213.5 L392.5,208.8 Z M390.5,240.2 L391.5,235.5 L392.5,240.2 Z M397.5,208.8 L398.5,213.5 L399.5,208.8 Z M397.5,240.2 L398.5,235.5 L399.5,240.2 Z M404.5,208.8 L405.5,213.5 L406.5,208.8 Z M404.5,240.2 L405.5,235.5 L406.5,240.2 Z M411.5,208.8 L412.5,213.5 L413.5,208.8 Z M411.5,240.2 L412.5,235.5 L413.5,240.2 Z M418.5,208.8 L419.5,213.5 L420.5,208.8 Z M418.5,240.2 L419.5,235.5 L420.5,240.2 Z M425.5,208.8 L426.5,213.5 L427.5,208.8 Z M425.5,240.2 L426.5,235.5 L427.5,240.2 Z M432.5,208.8 L433.5,213.5 L434.5,208.8 Z M432.5,240.2 L433.5,235.5 L434.5,240.2 Z M439.5,208.8 L440.5,213.5 L441.5,208.8 Z M439.5,240.2 L440.5,235.5 L441.5,240.2 Z M446.5,208.8 L447.5,213.5 L448.5,208.8 Z M446.5,240.2 L447.5,235.5 L448.5,240.2 Z M453.5,208.8 L454.5,213.5 L455.5,208.8 Z M453.5,240.2 L454.5,235.5 L455.5,240.2 Z M460.5,208.8 L461.5,213.5 L462.5,208.8 Z M460.5,240.2 L461.5,235.5 L462.5,240.2 Z M467.5,208.8 L468.5,213.5 L469.5,208.8 Z M467.5,240.2 L468.5,235.5 L469.5,240.2 Z M474.5,208.8 L475.5,213.5 L476.5,208.8 Z M474.5,240.2 L475.5,235.5 L476.5,240.2 Z M481.5,208.8 L482.5,213.5 L483.5,208.8 Z M481.5,240.2 L482.5,235.5 L483.5,240.2 Z M488.5,208.8 L489.5,213.5 L490.5,208.8 Z M488.5,240.2 L489.5,235.5 L490.5,240.2 Z M495.5,208.8 L496.5,213.5 L497.5,208.8 Z M495.5,240.2 L496.5,235.5 L497.5,240.2 Z M502.5,208.8 L503.5,213.5 L504.5,208.8 Z M502.5,240.2 L503.5,235.5 L504.5,240.2 Z M509.5,208.8 L510.5,213.5 L511.5,208.8 Z M509.5,240.2 L510.5,235.5 L511.5,240.2 Z M516.5,208.8 L517.5,213.5 L518.5,208.8 Z M516.5,240.2 L517.5,235.5 L518.5,240.2 Z M523.5,208.8 L524.5,213.5 L525.5,208.8 Z M523.5,240.2 L524.5,235.5 L525.5,240.2 Z M530.5,208.8 L531.5,213.5 L532.5,208.8 Z M530.5,240.2 L531.5,235.5 L532.5,240.2 Z M537.5,208.8 L538.5,213.5 L539.5,208.8 Z M537.5,240.2 L538.5,235.5 L539.5,240.2 Z M544.5,208.8 L545.5,213.5 L546.5,208.8 Z M544.5,240.2 L545.5,235.5 L546.5,240.2 Z M551.5,208.8 L552.5,213.5 L553.5,208.8 Z M551.5,240.2 L552.5,235.5 L553.5,240.2 Z M558.5,208.8 L559.5,213.5 L560.5,208.8 Z M558.5,240.2 L559.5,235.5 L560.5,240.2 Z M565.5,208.8 L566.5,213.5 L567.5,208.8 Z M565.5,240.2 L566.5,235.5 L567.5,240.2 Z M572.5,208.8 L573.5,213.5 L574.5,208.8 Z M572.5,240.2 L573.5,235.5 L574.5,240.2 Z M579.5,208.8 L580.5,213.5 L581.5,208.8 Z M579.5,240.2 L580.5,235.5 L581.5,240.2 Z M586.5,208.8 L587.5,213.5 L588.5,208.8 Z M586.5,240.2 L587.5,235.5 L588.5,240.2 Z M593.5,208.8 L594.5,213.5 L595.5,208.8 Z M593.5,240.2 L594.5,235.5 L595.5,240.2 Z M600.5,208.8 L601.5,213.5 L602.5,208.8 Z M600.5,240.2 L601.5,235.5 L602.5,240.2 Z M607.5,208.8 L608.5,213.5 L609.5,208.8 Z M607.5,240.2 L608.5,235.5 L609.5,240.2 Z M614.5,208.8 L615.5,213.5 L616.5,208.8 Z M614.5,240.2 L615.5,235.5 L616.5,240.2 Z M621.5,208.8 L622.5,213.5 L623.5,208.8 Z M621.5,240.2 L622.5,235.5 L623.5,240.2 Z M628.5,208.8 L629.5,213.5 L630.5,208.8 Z M628.5,240.2 L629.5,235.5 L630.5,240.2 Z M635.5,208.8 L636.5,213.5 L637.5,208.8 Z M635.5,240.2 L636.5,235.5 L637.5,240.2 Z M642.5,208.8 L643.5,213.5 L644.5,208.8 Z M642.5,240.2 L643.5,235.5 L644.5,240.2 Z M649.5,208.8 L650.5,213.5 L651.5,208.8 Z M649.5,240.2 L650.5,235.5 L651.5,240.2 Z M656.5,208.8 L657.5,213.5 L658.5,208.8 Z M656.5,240.2 L657.5,235.5 L658.5,240.2 Z M663.5,208.8 L664.5,213.5 L665.5,208.8 Z M663.5,240.2 L664.5,235.5 L665.5,240.2 Z M670.5,208.8 L671.5,213.5 L672.5,208.8 Z M670.5,240.2 L671.5,235.5 L672.5,240.2 Z M677.5,208.8 L678.5,213.5 L679.5,208.8 Z M677.5,240.2 L678.5,235.5 L679.5,240.2 Z M684.5,208.8 L685.5,213.5 L686.5,208.8 Z M684.5,240.2 L685.5,235.5 L686.5,240.2 Z M691.5,208.8 L692.5,213.5 L693.5,208.8 Z M691.5,240.2 L692.5,235.5 L693.5,240.2 Z M698.5,208.8 L699.5,213.5 L700.5,208.8 Z M698.5,240.2 L699.5,235.5 L700.5,240.2 Z M705.5,208.8 L706.5,213.5 L707.5,208.8 Z M705.5,240.2 L706.5,235.5 L707.5,240.2 Z M712.5,208.8 L713.5,213.5 L714.5,208.8 Z M712.5,240.2 L713.5,235.5 L714.5,240.2 Z M719.5,208.8 L720.5,213.5 L721.5,208.8 Z M719.5,240.2 L720.5,235.5 L721.5,240.2 Z M726.5,208.8 L727.5,213.5 L728.5,208.8 Z M726.5,240.2 L727.5,235.5 L728.5,240.2 Z M733.5,208.8 L734.5,213.5 L735.5,208.8 Z M733.5,240.2 L734.5,235.5 L735.5,240.2 Z M740.5,208.8 L741.5,213.5 L742.5,208.8 Z M740.5,240.2 L741.5,235.5 L742.5,240.2 Z M747.5,208.8 L748.5,213.5 L749.5,208.8 Z M747.5,240.2 L748.5,235.5 L749.5,240.2 Z M754.5,208.8 L755.5,213.5 L756.5,208.8 Z M754.5,240.2 L755.5,235.5 L756.5,240.2 Z M761.5,208.8 L762.5,213.5 L763.5,208.8 Z M761.5,240.2 L762.5,235.5 L763.5,240.2 Z M768.5,208.8 L769.5,213.5 L770.5,208.8 Z M768.5,240.2 L769.5,235.5 L770.5,240.2 Z M775.5,208.8 L776.5,213.5 L777.5,208.8 Z M775.5,240.2 L776.5,235.5 L777.5,240.2 Z M782.5,208.8 L783.5,213.5 L784.5,208.8 Z M782.5,240.2 L783.5,235.5 L784.5,240.2 Z M789.5,208.8 L790.5,213.5 L791.5,208.8 Z M789.5,240.2 L790.5,235.5 L791.5,240.2 Z M796.5,208.8 L797.5,213.5 L798.5,208.8 Z M796.5,240.2 L797.5,235.5 L798.5,240.2 Z M803.5,208.8 L804.5,213.5 L805.5,208.8 Z M803.5,240.2 L804.5,235.5 L805.5,240.2 Z M810.5,208.8 L811.5,213.5 L812.5,208.8 Z M810.5,240.2 L811.5,235.5 L812.5,240.2 Z M817.5,208.8 L818.5,213.5 L819.5,208.8 Z M817.5,240.2 L818.5,235.5 L819.5,240.2 Z M824.5,208.8 L825.5,213.5 L826.5,208.8 Z M824.5,240.2 L825.5,235.5 L826.5,240.2 Z M831.5,208.8 L832.5,213.5 L833.5,208.8 Z M831.5,240.2 L832.5,235.5 L833.5,240.2 Z M838.5,208.8 L839.5,213.5 L840.5,208.8 Z M838.5,240.2 L839.5,235.5 L840.5,240.2 Z M845.5,208.8 L846.5,213.5 L847.5,208.8 Z M845.5,240.2 L846.5,235.5 L847.5,240.2 Z M852.5,208.8 L853.5,213.5 L854.5,208.8 Z M852.5,240.2 L853.5,235.5 L854.5,240.2 Z M859.5,208.8 L860.5,213.5 L861.5,208.8 Z M859.5,240.2 L860.5,235.5 L861.5,240.2 Z M866.5,208.8 L867.5,213.5 L868.5,208.8 Z M866.5,240.2 L867.5,235.5 L868.5,240.2 Z M873.5,208.8 L874.5,213.5 L875.5,208.8 Z M873.5,240.2 L874.5,235.5 L875.5,240.2 Z M880.5,208.8 L881.5,213.5 L882.5,208.8 Z M880.5,240.2 L881.5,235.5 L882.5,240.2 Z M887.5,208.8 L888.5,213.5 L889.5,208.8 Z M887.5,240.2 L888.5,235.5 L889.5,240.2 Z M894.5,208.8 L895.5,213.5 L896.5,208.8 Z M894.5,240.2 L895.5,235.5 L896.5,240.2 Z M901.5,208.8 L902.5,213.5 L903.5,208.8 Z M901.5,240.2 L902.5,235.5 L903.5,240.2 Z M908.5,208.8 L909.5,213.5 L910.5,208.8 Z M908.5,240.2 L909.5,235.5 L910.5,240.2 Z M915.5,208.8 L916.5,213.5 L917.5,208.8 Z M915.5,240.2 L916.5,235.5 L917.5,240.2 Z M922.5,208.8 L923.5,213.5 L924.5,208.8 Z M922.5,240.2 L923.5,235.5 L924.5,240.2 Z M929.5,208.8 L930.5,213.5 L931.5,208.8 Z M929.5,240.2 L930.5,235.5 L931.5,240.2 Z M936.5,208.8 L937.5,213.5 L938.5,208.8 Z M936.5,240.2 L937.5,235.5 L938.5,240.2 Z M943.5,208.8 L944.5,213.5 L945.5,208.8 Z M943.5,240.2 L944.5,235.5 L945.5,240.2 Z M950.5,208.8 L951.5,213.5 L952.5,208.8 Z M950.5,240.2 L951.5,235.5 L952.5,240.2 Z M957.5,208.8 L958.5,213.5 L959.5,208.8 Z M957.5,240.2 L958.5,235.5 L959.5,240.2 Z M964.5,208.8 L965.5,213.5 L966.5,208.8 Z M964.5,240.2 L965.5,235.5 L966.5,240.2 Z M971.5,208.8 L972.5,213.5 L973.5,208.8 Z M971.5,240.2 L972.5,235.5 L973.5,240.2 Z M978.5,208.8 L979.5,213.5 L980.5,208.8 Z M978.5,240.2 L979.5,235.5 L980.5,240.2 Z M985.5,208.8 L986.5,213.5 L987.5,208.8 Z M985.5,240.2 L986.5,235.5 L987.5,240.2 Z M992.5,208.8 L993.5,213.5 L994.5,208.8 Z M992.5,240.2 L993.5,235.5 L994.5,240.2 Z M999.5,208.8 L1000.5,213.5 L1001.5,208.8 Z M999.5,240.2 L1000.5,235.5 L1001.5,240.2 Z M1006.5,208.8 L1007.5,213.5 L1008.5,208.8 Z M1006.5,240.2 L1007.5,235.5 L1008.5,240.2 Z M1013.5,208.8 L1014.5,213.5 L1015.5,208.8 Z M1013.5,240.2 L1014.5,235.5 L1015.5,240.2 Z M1020.5,208.8 L1021.5,213.5 L1022.5,208.8 Z M1020.5,240.2 L1021.5,235.5 L1022.5,240.2 Z M1027.5,208.8 L1028.5,213.5 L1029.5,208.8 Z M1027.5,240.2 L1028.5,235.5 L1029.5,240.2 Z M1034.5,208.8 L1035.5,213.5 L1036.5,208.8 Z M1034.5,240.2 L1035.5,235.5 L1036.5,240.2 Z M1041.5,208.8 L1042.5,213.5 L1043.5,208.8 Z M1041.5,240.2 L1042.5,235.5 L1043.5,240.2 Z M1048.5,208.8 L1049.5,213.5 L1050.5,208.8 Z M1048.5,240.2 L1049.5,235.5 L1050.5,240.2 Z M1055.5,208.8 L1056.5,213.5 L1057.5,208.8 Z M1055.5,240.2 L1056.5,235.5 L1057.5,240.2 Z M1062.5,208.8 L1063.5,213.5 L1064.5,208.8 Z M1062.5,240.2 L1063.5,235.5 L1064.5,240.2 Z M1069.5,208.8 L1070.5,213.5 L1071.5,208.8 Z M1069.5,240.2 L1070.5,235.5 L1071.5,240.2 Z M1076.5,208.8 L1077.5,213.5 L1078.5,208.8 Z M1076.5,240.2 L1077.5,235.5 L1078.5,240.2 Z M1083.5,208.8 L1084.5,213.5 L1085.5,208.8 Z M1083.5,240.2 L1084.5,235.5 L1085.5,240.2 Z M1090.5,208.8 L1091.5,213.5 L1092.5,208.8 Z M1090.5,240.2 L1091.5,235.5 L1092.5,240.2 Z M1097.5,208.8 L1098.5,213.5 L1099.5,208.8 Z M1097.5,240.2 L1098.5,235.5 L1099.5,240.2 Z M1104.5,208.8 L1105.5,213.5 L1106.5,208.8 Z M1104.5,240.2 L1105.5,235.5 L1106.5,240.2 Z M1111.5,208.8 L1112.5,213.5 L1113.5,208.8 Z M1111.5,240.2 L1112.5,235.5 L1113.5,240.2 Z M1118.5,208.8 L1119.5,213.5 L1120.5,208.8 Z M1118.5,240.2 L1119.5,235.5 L1120.5,240.2 Z M1125.5,208.8 L1126.5,213.5 L1127.5,208.8 Z M1125.5,240.2 L1126.5,235.5 L1127.5,240.2 Z M1132.5,208.8 L1133.5,213.5 L1134.5,208.8 Z M1132.5,240.2 L1133.5,235.5 L1134.5,240.2 Z M1139.5,208.8 L1140.5,213.5 L1141.5,208.8 Z M1139.5,240.2 L1140.5,235.5 L1141.5,240.2 Z M1146.5,208.8 L1147.5,213.5 L1148.5,208.8 Z M1146.5,240.2 L1147.5,235.5 L1148.5,240.2 Z M1153.5,208.8 L1154.5,213.5 L1155.5,208.8 Z M1153.5,240.2 L1154.5,235.5 L1155.5,240.2 Z M1160.5,208.8 L1161.5,213.5 L1162.5,208.8 Z M1160.5,240.2 L1161.5,235.5 L1162.5,240.2 Z M1167.5,208.8 L1168.5,213.5 L1169.5,208.8 Z M1167.5,240.2 L1168.5,235.5 L1169.5,240.2 Z M1174.5,208.8 L1175.5,213.5 L1176.5,208.8 Z M1174.5,240.2 L1175.5,235.5 L1176.5,240.2 Z" fill="#000"/>
<path d="M306.2,209.9 L307.5,213.8 L308.8,209.9 M306.2,239.1 L307.5,235.2 L308.8,239.1 M313.2,209.9 L314.5,213.8 L315.8,209.9 M313.2,239.1 L314.5,235.2 L315.8,239.1 M320.2,209.9 L321.5,213.8 L322.8,209.9 M320.2,239.1 L321.5,235.2 L322.8,239.1 M327.2,209.9 L328.5,213.8 L329.8,209.9 M327.2,239.1 L328.5,235.2 L329.8,239.1 M334.2,209.9 L335.5,213.8 L336.8,209.9 M334.2,239.1 L335.5,235.2 L336.8,239.1 M341.2,209.9 L342.5,213.8 L343.8,209.9 M341.2,239.1 L342.5,235.2 L343.8,239.1 M348.2,209.9 L349.5,213.8 L350.8,209.9 M348.2,239.1 L349.5,235.2 L350.8,239.1 M355.2,209.9 L356.5,213.8 L357.8,209.9 M355.2,239.1 L356.5,235.2 L357.8,239.1 M362.2,209.9 L363.5,213.8 L364.8,209.9 M362.2,239.1 L363.5,235.2 L364.8,239.1 M369.2,209.9 L370.5,213.8 L371.8,209.9 M369.2,239.1 L370.5,235.2 L371.8,239.1 M376.2,209.9 L377.5,213.8 L378.8,209.9 M376.2,239.1 L377.5,235.2 L378.8,239.1 M383.2,209.9 L384.5,213.8 L385.8,209.9 M383.2,239.1 L384.5,235.2 L385.8,239.1 M390.2,209.9 L391.5,213.8 L392.8,209.9 M390.2,239.1 L391.5,235.2 L392.8,239.1 M397.2,209.9 L398.5,213.8 L399.8,209.9 M397.2,239.1 L398.5,235.2 L399.8,239.1 M404.2,209.9 L405.5,213.8 L406.8,209.9 M404.2,239.1 L405.5,235.2 L406.8,239.1 M411.2,209.9 L412.5,213.8 L413.8,209.9 M411.2,239.1 L412.5,235.2 L413.8,239.1 M418.2,209.9 L419.5,213.8 L420.8,209.9 M418.2,239.1 L419.5,235.2 L420.8,239.1 M425.2,209.9 L426.5,213.8 L427.8,209.9 M425.2,239.1 L426.5,235.2 L427.8,239.1 M432.2,209.9 L433.5,213.8 L434.8,209.9 M432.2,239.1 L433.5,235.2 L434.8,239.1 M439.2,209.9 L440.5,213.8 L441.8,209.9 M439.2,239.1 L440.5,235.2 L441.8,239.1 M446.2,209.9 L447.5,213.8 L448.8,209.9 M446.2,239.1 L447.5,235.2 L448.8,239.1 M453.2,209.9 L454.5,213.8 L455.8,209.9 M453.2,239.1 L454.5,235.2 L455.8,239.1 M460.2,209.9 L461.5,213.8 L462.8,209.9 M460.2,239.1 L461.5,235.2 L462.8,239.1 M467.2,209.9 L468.5,213.8 L469.8,209.9 M467.2,239.1 L468.5,235.2 L469.8,239.1 M474.2,209.9 L475.5,213.8 L476.8,209.9 M474.2,239.1 L475.5,235.2 L476.8,239.1 M481.2,209.9 L482.5,213.8 L483.8,209.9 M481.2,239.1 L482.5,235.2 L483.8,239.1 M488.2,209.9 L489.5,213.8 L490.8,209.9 M488.2,239.1 L489.5,235.2 L490.8,239.1 M495.2,209.9 L496.5,213.8 L497.8,209.9 M495.2,239.1 L496.5,235.2 L497.8,239.1 M502.2,209.9 L503.5,213.8 L504.8,209.9 M502.2,239.1 L503.5,235.2 L504.8,239.1 M509.2,209.9 L510.5,213.8 L511.8,209.9 M509.2,239.1 L510.5,235.2 L511.8,239.1 M516.2,209.9 L517.5,213.8 L518.8,209.9 M516.2,239.1 L517.5,235.2 L518.8,239.1 M523.2,209.9 L524.5,213.8 L525.8,209.9 M523.2,239.1 L524.5,235.2 L525.8,239.1 M530.2,209.9 L531.5,213.8 L532.8,209.9 M530.2,239.1 L531.5,235.2 L532.8,239.1 M537.2,209.9 L538.5,213.8 L539.8,209.9 M537.2,239.1 L538.5,235.2 L539.8,239.1 M544.2,209.9 L545.5,213.8 L546.8,209.9 M544.2,239.1 L545.5,235.2 L546.8,239.1 M551.2,209.9 L552.5,213.8 L553.8,209.9 M551.2,239.1 L552.5,235.2 L553.8,239.1 M558.2,209.9 L559.5,213.8 L560.8,209.9 M558.2,239.1 L559.5,235.2 L560.8,239.1 M565.2,209.9 L566.5,213.8 L567.8,209.9 M565.2,239.1 L566.5,235.2 L567.8,239.1 M572.2,209.9 L573.5,213.8 L574.8,209.9 M572.2,239.1 L573.5,235.2 L574.8,239.1 M579.2,209.9 L580.5,213.8 L581.8,209.9 M579.2,239.1 L580.5,235.2 L581.8,239.1 M586.2,209.9 L587.5,213.8 L588.8,209.9 M586.2,239.1 L587.5,235.2 L588.8,239.1 M593.2,209.9 L594.5,213.8 L595.8,209.9 M593.2,239.1 L594.5,235.2 L595.8,239.1 M600.2,209.9 L601.5,213.8 L602.8,209.9 M600.2,239.1 L601.5,235.2 L602.8,239.1 M607.2,209.9 L608.5,213.8 L609.8,209.9 M607.2,239.1 L608.5,235.2 L609.8,239.1 M614.2,209.9 L615.5,213.8 L616.8,209.9 M614.2,239.1 L615.5,235.2 L616.8,239.1 M621.2,209.9 L622.5,213.8 L623.8,209.9 M621.2,239.1 L622.5,235.2 L623.8,239.1 M628.2,209.9 L629.5,213.8 L630.8,209.9 M628.2,239.1 L629.5,235.2 L630.8,239.1 M635.2,209.9 L636.5,213.8 L637.8,209.9 M635.2,239.1 L636.5,235.2 L637.8,239.1 M642.2,209.9 L643.5,213.8 L644.8,209.9 M642.2,239.1 L643.5,235.2 L644.8,239.1 M649.2,209.9 L650.5,213.8 L651.8,209.9 M649.2,239.1 L650.5,235.2 L651.8,239.1 M656.2,209.9 L657.5,213.8 L658.8,209.9 M656.2,239.1 L657.5,235.2 L658.8,239.1 M663.2,209.9 L664.5,213.8 L665.8,209.9 M663.2,239.1 L664.5,235.2 L665.8,239.1 M670.2,209.9 L671.5,213.8 L672.8,209.9 M670.2,239.1 L671.5,235.2 L672.8,239.1 M677.2,209.9 L678.5,213.8 L679.8,209.9 M677.2,239.1 L678.5,235.2 L679.8,239.1 M684.2,209.9 L685.5,213.8 L686.8,209.9 M684.2,239.1 L685.5,235.2 L686.8,239.1 M691.2,209.9 L692.5,213.8 L693.8,209.9 M691.2,239.1 L692.5,235.2 L693.8,239.1 M698.2,209.9 L699.5,213.8 L700.8,209.9 M698.2,239.1 L699.5,235.2 L700.8,239.1 M705.2,209.9 L706.5,213.8 L707.8,209.9 M705.2,239.1 L706.5,235.2 L707.8,239.1 M712.2,209.9 L713.5,213.8 L714.8,209.9 M712.2,239.1 L713.5,235.2 L714.8,239.1 M719.2,209.9 L720.5,213.8 L721.8,209.9 M719.2,239.1 L720.5,235.2 L721.8,239.1 M726.2,209.9 L727.5,213.8 L728.8,209.9 M726.2,239.1 L727.5,235.2 L728.8,239.1 M733.2,209.9 L734.5,213.8 L735.8,209.9 M733.2,239.1 L734.5,235.2 L735.8,239.1 M740.2,209.9 L741.5,213.8 L742.8,209.9 M740.2,239.1 L741.5,235.2 L742.8,239.1 M747.2,209.9 L748.5,213.8 L749.8,209.9 M747.2,239.1 L748.5,235.2 L749.8,239.1 M754.2,209.9 L755.5,213.8 L756.8,209.9 M754.2,239.1 L755.5,235.2 L756.8,239.1 M761.2,209.9 L762.5,213.8 L763.8,209.9 M761.2,239.1 L762.5,235.2 L763.8,239.1 M768.2,209.9 L769.5,213.8 L770.8,209.9 M768.2,239.1 L769.5,235.2 L770.8,239.1 M775.2,209.9 L776.5,213.8 L777.8,209.9 M775.2,239.1 L776.5,235.2 L777.8,239.1 M782.2,209.9 L783.5,213.8 L784.8,209.9 M782.2,239.1 L783.5,235.2 L784.8,239.1 M789.2,209.9 L790.5,213.8 L791.8,209.9 M789.2,239.1 L790.5,235.2 L791.8,239.1 M796.2,209.9 L797.5,213.8 L798.8,209.9 M796.2,239.1 L797.5,235.2 L798.8,239.1 M803.2,209.9 L804.5,213.8 L805.8,209.9 M803.2,239.1 L804.5,235.2 L805.8,239.1 M810.2,209.9 L811.5,213.8 L812.8,209.9 M810.2,239.1 L811.5,235.2 L812.8,239.1 M817.2,209.9 L818.5,213.8 L819.8,209.9 M817.2,239.1 L818.5,235.2 L819.8,239.1 M824.2,209.9 L825.5,213.8 L826.8,209.9 M824.2,239.1 L825.5,235.2 L826.8,239.1 M831.2,209.9 L832.5,213.8 L833.8,209.9 M831.2,239.1 L832.5,235.2 L833.8,239.1 M838.2,209.9 L839.5,213.8 L840.8,209.9 M838.2,239.1 L839.5,235.2 L840.8,239.1 M845.2,209.9 L846.5,213.8 L847.8,209.9 M845.2,239.1 L846.5,235.2 L847.8,239.1 M852.2,209.9 L853.5,213.8 L854.8,209.9 M852.2,239.1 L853.5,235.2 L854.8,239.1 M859.2,209.9 L860.5,213.8 L861.8,209.9 M859.2,239.1 L860.5,235.2 L861.8,239.1 M866.2,209.9 L867.5,213.8 L868.8,209.9 M866.2,239.1 L867.5,235.2 L868.8,239.1 M873.2,209.9 L874.5,213.8 L875.8,209.9 M873.2,239.1 L874.5,235.2 L875.8,239.1 M880.2,209.9 L881.5,213.8 L882.8,209.9 M880.2,239.1 L881.5,235.2 L882.8,239.1 M887.2,209.9 L888.5,213.8 L889.8,209.9 M887.2,239.1 L888.5,235.2 L889.8,239.1 M894.2,209.9 L895.5,213.8 L896.8,209.9 M894.2,239.1 L895.5,235.2 L896.8,239.1 M901.2,209.9 L902.5,213.8 L903.8,209.9 M901.2,239.1 L902.5,235.2 L903.8,239.1 M908.2,209.9 L909.5,213.8 L910.8,209.9 M908.2,239.1 L909.5,235.2 L910.8,239.1 M915.2,209.9 L916.5,213.8 L917.8,209.9 M915.2,239.1 L916.5,235.2 L917.8,239.1 M922.2,209.9 L923.5,213.8 L924.8,209.9 M922.2,239.1 L923.5,235.2 L924.8,239.1 M929.2,209.9 L930.5,213.8 L931.8,209.9 M929.2,239.1 L930.5,235.2 L931.8,239.1 M936.2,209.9 L937.5,213.8 L938.8,209.9 M936.2,239.1 L937.5,235.2 L938.8,239.1 M943.2,209.9 L944.5,213.8 L945.8,209.9 M943.2,239.1 L944.5,235.2 L945.8,239.1 M950.2,209.9 L951.5,213.8 L952.8,209.9 M950.2,239.1 L951.5,235.2 L952.8,239.1 M957.2,209.9 L958.5,213.8 L959.8,209.9 M957.2,239.1 L958.5,235.2 L959.8,239.1 M964.2,209.9 L965.5,213.8 L966.8,209.9 M964.2,239.1 L965.5,235.2 L966.8,239.1 M971.2,209.9 L972.5,213.8 L973.8,209.9 M971.2,239.1 L972.5,235.2 L973.8,239.1 M978.2,209.9 L979.5,213.8 L980.8,209.9 M978.2,239.1 L979.5,235.2 L980.8,239.1 M985.2,209.9 L986.5,213.8 L987.8,209.9 M985.2,239.1 L986.5,235.2 L987.8,239.1 M992.2,209.9 L993.5,213.8 L994.8,209.9 M992.2,239.1 L993.5,235.2 L994.8,239.1 M999.2,209.9 L1000.5,213.8 L1001.8,209.9 M999.2,239.1 L1000.5,235.2 L1001.8,239.1 M1006.2,209.9 L1007.5,213.8 L1008.8,209.9 M1006.2,239.1 L1007.5,235.2 L1008.8,239.1 M1013.2,209.9 L1014.5,213.8 L1015.8,209.9 M1013.2,239.1 L1014.5,235.2 L1015.8,239.1 M1020.2,209.9 L1021.5,213.8 L1022.8,209.9 M1020.2,239.1 L1021.5,235.2 L1022.8,239.1 M1027.2,209.9 L1028.5,213.8 L1029.8,209.9 M1027.2,239.1 L1028.5,235.2 L1029.8,239.1 M1034.2,209.9 L1035.5,213.8 L1036.8,209.9 M1034.2,239.1 L1035.5,235.2 L1036.8,239.1 M1041.2,209.9 L1042.5,213.8 L1043.8,209.9 M1041.2,239.1 L1042.5,235.2 L1043.8,239.1 M1048.2,209.9 L1049.5,213.8 L1050.8,209.9 M1048.2,239.1 L1049.5,235.2 L1050.8,239.1 M1055.2,209.9 L1056.5,213.8 L1057.8,209.9 M1055.2,239.1 L1056.5,235.2 L1057.8,239.1 M1062.2,209.9 L1063.5,213.8 L1064.8,209.9 M1062.2,239.1 L1063.5,235.2 L1064.8,239.1 M1069.2,209.9 L1070.5,213.8 L1071.8,209.9 M1069.2,239.1 L1070.5,235.2 L1071.8,239.1 M1076.2,209.9 L1077.5,213.8 L1078.8,209.9 M1076.2,239.1 L1077.5,235.2 L1078.8,239.1 M1083.2,209.9 L1084.5,213.8 L1085.8,209.9 M1083.2,239.1 L1084.5,235.2 L1085.8,239.1 M1090.2,209.9 L1091.5,213.8 L1092.8,209.9 M1090.2,239.1 L1091.5,235.2 L1092.8,239.1 M1097.2,209.9 L1098.5,213.8 L1099.8,209.9 M1097.2,239.1 L1098.5,235.2 L1099.8,239.1 M1104.2,209.9 L1105.5,213.8 L1106.8,209.9 M1104.2,239.1 L1105.5,235.2 L1106.8,239.1 M1111.2,209.9 L1112.5,213.8 L1113.8,209.9 M1111.2,239.1 L1112.5,235.2 L1113.8,239.1 M1118.2,209.9 L1119.5,213.8 L1120.8,209.9 M1118.2,239.1 L1119.5,235.2 L1120.8,239.1 M1125.2,209.9 L1126.5,213.8 L1127.8,209.9 M1125.2,239.1 L1126.5,235.2 L1127.8,239.1 M1132.2,209.9 L1133.5,213.8 L1134.8,209.9 M1132.2,239.1 L1133.5,235.2 L1134.8,239.1 M1139.2,209.9 L1140.5,213.8 L1141.8,209.9 M1139.2,239.1 L1140.5,235.2 L1141.8,239.1 M1146.2,209.9 L1147.5,213.8 L1148.8,209.9 M1146.2,239.1 L1147.5,235.2 L1148.8,239.1 M1153.2,209.9 L1154.5,213.8 L1155.8,209.9 M1153.2,239.1 L1154.5,235.2 L1155.8,239.1 M1160.2,209.9 L1161.5,213.8 L1162.8,209.9 M1160.2,239.1 L1161.5,235.2 L1162.8,239.1 M1167.2,209.9 L1168.5,213.8 L1169.8,209.9 M1167.2,239.1 L1168.5,235.2 L1169.8,239.1 M1174.2,209.9 L1175.5,213.8 L1176.8,209.9 M1174.2,239.1 L1175.5,235.2 L1176.8,239.1" fill="none" stroke="#0ff" stroke-width="0.9" stroke-linejoin="miter"/>
<path d="M1180.5,209.3 Q1178.5,224.5 1180.5,239.7" fill="none" stroke="#000" stroke-width="1.2"/>
<path d="M1186.5,209.5 H1182.5 V239.5 H1186.5" fill="none" stroke="#00ffff" stroke-width="1"/>
<g fill="none" stroke="#10dde5" stroke-width="1.1" stroke-linejoin="round">
<path d="M300.6,387.7L302.4,387.7L304.1,387.7L305.9,387.7L307.6,387.7L309.4,387.7L311.1,387.7L312.9,387.7L314.7,387.7L316.4,387.7L318.2,387.7L319.9,387.7L321.7,387.7L323.5,387.7L325.2,387.7L327.0,387.7L328.7,387.7L330.5,387.7L332.2,387.7L334.0,387.7L335.8,387.7L337.5,387.7L339.3,387.7L341.0,387.7L342.8,387.7L344.6,387.7L346.3,387.7L348.1,387.7L349.8,387.7L351.6,387.7L353.3,387.7L355.1,387.7L356.9,387.7L358.6,387.7L360.4,387.7L362.1,387.7L363.9,387.7L365.6,387.7L367.4,387.7L369.2,387.7L370.9,387.7L372.7,387.7L374.4,387.7L376.2,387.7L376.2,373.2L378.0,373.2L379.7,373.2L381.5,373.2L383.2,373.2L385.0,373.3L386.7,373.4L388.5,373.6L390.3,374.0L392.0,374.5L393.8,375.3L395.5,376.3L397.3,377.6L399.0,379.3L400.8,381.3L402.6,383.6L404.3,386.3L406.1,389.2L407.8,392.2L409.6,395.1L411.4,397.9L413.1,400.1L414.9,401.6L416.6,402.2L418.4,401.6L420.1,399.8L421.9,396.8L423.7,392.6L425.4,387.8L427.2,382.8L428.9,378.3L430.7,374.9L432.5,373.3L434.2,373.9L436.0,376.8L437.7,381.7L439.5,387.9L441.2,394.3L443.0,399.4L444.8,402.0L446.5,401.4L448.3,397.4L450.0,390.8L451.8,383.3L453.5,376.8L455.3,373.4L457.1,374.4L458.8,379.6L460.6,387.8L462.3,396.0L464.1,401.3L465.9,401.6L467.6,396.4L469.4,387.5L471.1,378.6L472.9,373.5L474.6,374.9L476.4,382.3L478.2,392.5L479.9,400.4L481.7,401.8L483.4,395.5L485.2,384.8L486.9,375.6L488.7,373.5L490.5,380.0L492.2,391.5L494.0,400.6L495.7,401.2L497.5,392.6L499.3,380.4L501.0,373.4L502.8,377.0L504.5,388.8L506.3,399.9L508.0,401.3L509.8,391.5L511.6,378.4L513.3,373.3L515.1,380.9L516.8,394.8L518.6,402.2L520.4,395.9L522.1,381.6L523.9,373.3L525.6,379.6L527.4,394.4L529.1,402.2L530.9,394.4L532.7,379.1L534.4,373.5L536.2,384.2L537.9,399.1L539.7,400.5L541.4,386.3L543.2,373.8L545.0,378.9L546.7,395.4L548.5,401.9L550.2,389.4L552.0,374.6L553.8,377.8L555.5,395.0L557.3,401.8L559.0,388.0L560.8,373.8L562.5,380.5L564.3,398.3L566.1,399.7L567.8,382.1L569.6,373.5L571.3,388.0L573.1,402.0L574.8,392.0L576.6,374.6L578.4,379.8L580.1,398.9L581.9,398.1L583.6,378.6L585.4,375.7L587.2,395.1L588.9,400.5L590.7,381.5L592.4,374.4L594.2,393.3L595.9,401.1L597.7,382.0L599.5,374.5L601.2,394.1L603.0,400.4L604.7,379.9L606.5,376.1L608.2,397.3L610.0,397.6L611.8,376.0L613.5,380.6L615.3,401.2L617.0,391.0L618.8,373.2L620.6,389.3L622.3,401.6L624.1,380.8L625.8,376.7L627.6,399.3L629.3,393.4L631.1,373.4L632.9,389.3L634.6,401.1L636.4,378.6L638.1,379.6L639.9,401.6L641.7,387.1L643.4,374.3L645.2,397.4L646.9,394.3L648.7,373.3L650.4,391.9L652.2,398.8L654.0,374.7L655.7,387.2L657.5,401.0L659.2,376.7L661.0,384.2L662.7,401.8L664.5,378.1L666.3,382.8L668.0,402.0L669.8,378.3L671.5,383.1L673.3,401.8L675.1,377.3L676.8,384.9L678.6,401.1L680.3,375.5L682.1,388.4L683.8,399.0L685.6,373.7L687.4,393.4L689.1,394.6L690.9,373.4L692.6,398.9L694.4,387.5L696.2,376.9L697.9,402.1L699.7,379.1L701.4,385.1L703.2,399.7L704.9,373.5L706.7,395.9L708.5,390.1L710.2,376.2L712.0,402.2L713.7,377.7L715.5,388.4L717.2,396.5L719.0,373.6L720.8,400.8L722.5,381.1L724.3,385.1L726.0,398.3L727.8,373.2L729.6,373.2L731.3,373.2L733.1,373.2L734.8,373.2L736.6,373.3L738.3,373.4L740.1,373.6L741.9,374.0L743.6,374.5L745.4,375.3L747.1,376.3L748.9,377.6L750.6,379.3L752.4,381.3L754.2,383.6L755.9,386.3L757.7,389.2L759.4,392.2L761.2,395.1L763.0,397.9L764.7,400.1L766.5,401.6L768.2,402.2L770.0,401.6L771.7,399.8L773.5,396.8L775.3,392.6L777.0,387.8L778.8,382.8L780.5,378.3L782.3,374.9L784.0,373.3L785.8,373.9L787.6,376.8L789.3,381.7L791.1,387.9L792.8,394.3L794.6,399.4L796.4,402.0L798.1,401.4L799.9,397.4L801.6,390.8L803.4,383.3L805.1,376.8L806.9,373.4L808.7,374.4L810.4,379.6L812.2,387.8L813.9,396.0L815.7,401.3L817.5,401.6L819.2,396.4L821.0,387.5L822.7,378.6L824.5,373.5L826.2,374.9L828.0,382.3L829.8,392.5L831.5,400.4L833.3,401.8L835.0,395.5L836.8,384.8L838.5,375.6L840.3,373.5L842.1,380.0L843.8,391.5L845.6,400.6L847.3,401.2L849.1,392.6L850.9,380.4L852.6,373.4L854.4,377.0L856.1,388.8L857.9,399.9L859.6,401.3L861.4,391.5L863.2,378.4L864.9,373.3L866.7,380.9L868.4,394.8L870.2,402.2L872.0,395.9L873.7,381.6L875.5,373.3L877.2,379.6L879.0,394.4L880.7,402.2L882.5,394.4L884.3,379.1L886.0,373.5L887.8,384.2L889.5,399.1L891.3,400.5L893.0,386.3L894.8,373.8L896.6,378.9L898.3,395.4L900.1,401.9L901.8,389.4L903.6,374.6L905.4,377.8L907.1,395.0L908.9,401.8L910.6,388.0L912.4,373.8L914.1,380.5L915.9,398.3L917.7,399.7L919.4,382.1L921.2,373.5L922.9,388.0L924.7,402.0L926.4,392.0L928.2,374.6L930.0,379.8L931.7,398.9L933.5,398.1L935.2,378.6L937.0,375.7L938.8,395.1L940.5,400.5L942.3,381.5L944.0,374.4L945.8,393.3L947.5,401.1L949.3,382.0L951.1,374.5L952.8,394.1L954.6,400.4L956.3,379.9L958.1,376.1L959.9,397.3L961.6,397.6L963.4,376.0L965.1,380.6L966.9,401.2L968.6,391.0L970.4,373.2L972.2,389.3L973.9,401.6L975.7,380.8L977.4,376.7L979.2,399.3L980.9,393.4L982.7,373.4L984.5,389.3L986.2,401.1L988.0,378.6L989.7,379.6L991.5,401.6L993.3,387.1L995.0,374.3L996.8,397.4L998.5,394.3L1000.3,373.3L1002.0,391.9L1003.8,398.8L1005.6,374.7L1007.3,387.2L1009.1,401.0L1010.8,376.7L1012.6,384.2L1014.3,401.8L1016.1,378.1L1017.9,382.8L1019.6,402.0L1021.4,378.3L1023.1,383.1L1024.9,401.8L1026.7,377.3L1028.4,384.9L1030.2,401.1L1031.9,375.5L1033.7,388.4L1035.4,399.0L1037.2,373.7L1039.0,393.4L1040.7,394.6L1042.5,373.4L1044.2,398.9L1046.0,387.5L1047.8,376.9L1049.5,402.1L1051.3,379.1L1053.0,385.1L1054.8,399.7L1056.5,373.5L1058.3,395.9L1060.1,390.1L1061.8,376.2L1063.6,402.2L1065.3,377.7L1067.1,388.4L1068.8,396.5L1070.6,373.6L1072.4,400.8L1074.1,381.1L1075.9,385.1L1077.6,398.3L1079.4,373.3L1081.2,387.7L1082.9,387.7L1084.7,387.7L1086.4,387.7L1088.2,387.7L1089.9,387.7L1091.7,387.7L1093.5,387.7L1095.2,387.7L1097.0,387.7L1098.7,387.7L1100.5,387.7L1102.2,387.7L1104.0,387.7L1105.8,387.7L1107.5,387.7L1109.3,387.7L1111.0,387.7L1112.8,387.7L1114.6,387.7L1116.3,387.7L1118.1,387.7L1119.8,387.7L1121.6,387.7L1123.3,387.7L1125.1,387.7L1126.9,387.7L1128.6,387.7L1130.4,387.7L1132.1,387.7L1133.9,387.7L1135.7,387.7L1137.4,387.7L1139.2,387.7L1140.9,387.7L1142.7,387.7L1144.4,387.7L1146.2,387.7L1148.0,387.7L1149.7,387.7L1151.5,387.7L1153.2,387.7L1155.0,387.7L1156.7,387.7L1158.5,387.7L1160.3,387.7L1162.0,387.7L1163.8,387.7L1165.5,387.7L1167.3,387.7L1169.1,387.7L1170.8,387.7L1172.6,387.7L1174.3,387.7L1176.1,387.7L1177.8,387.7L1179.6,387.7"/>
<path d="M300.6,429.5L302.4,429.5L304.1,429.5L305.9,429.5L307.6,429.5L309.4,429.5L311.1,429.5L312.9,429.5L314.7,429.5L316.4,429.5L318.2,429.5L319.9,429.5L321.7,429.5L323.5,429.5L325.2,429.5L327.0,429.5L328.7,429.5L330.5,429.5L332.2,429.5L334.0,429.5L335.8,429.5L337.5,429.5L339.3,429.5L341.0,429.5L342.8,429.5L344.6,429.5L346.3,429.5L348.1,429.5L349.8,429.5L351.6,429.5L353.3,429.5L355.1,429.5L356.9,429.5L358.6,429.5L360.4,429.5L362.1,429.5L363.9,429.5L365.6,429.5L367.4,429.5L369.2,429.5L370.9,429.5L372.7,429.5L374.4,429.5L376.2,429.5L378.0,429.5L379.7,429.5L381.5,429.5L383.2,429.5L385.0,429.5L386.7,429.6L388.5,429.5L390.3,429.4L392.0,429.5L393.8,429.7L395.5,429.5L397.3,429.2L399.0,429.4L400.8,429.9L402.6,429.7L404.3,428.9L406.1,429.2L407.8,430.6L409.6,430.3L411.4,425.7L413.1,418.8L414.9,414.2L416.6,413.9L418.4,415.3L420.1,415.6L421.9,414.9L423.7,414.8L425.4,415.5L427.2,416.0L428.9,416.3L430.7,416.9L432.5,418.1L434.2,419.5L436.0,421.1L437.7,423.0L439.5,425.4L441.2,428.1L443.0,431.0L444.8,434.0L446.5,436.9L448.3,439.7L450.0,441.9L451.8,443.4L453.5,444.0L455.3,443.5L457.1,441.6L458.8,438.6L460.6,434.5L462.3,429.6L464.1,424.6L465.9,420.1L467.6,416.7L469.4,415.1L471.1,415.7L472.9,418.6L474.6,423.5L476.4,429.7L478.2,436.1L479.9,441.2L481.7,443.8L483.4,443.2L485.2,439.2L486.9,432.6L488.7,425.1L490.5,418.6L492.2,415.2L494.0,416.1L495.7,421.4L497.5,429.5L499.3,437.8L501.0,443.2L502.8,443.4L504.5,438.2L506.3,429.3L508.0,420.4L509.8,415.3L511.6,416.7L513.3,424.1L515.1,434.3L516.8,442.2L518.6,443.6L520.4,437.3L522.1,426.6L523.9,417.4L525.6,415.3L527.4,421.8L529.1,433.3L530.9,442.4L532.7,443.0L534.4,434.4L536.2,422.2L537.9,415.2L539.7,418.8L541.4,430.6L543.2,441.7L545.0,443.1L546.7,433.3L548.5,420.2L550.2,415.1L552.0,422.7L553.8,436.5L555.5,444.0L557.3,437.7L559.0,423.4L560.8,415.0L562.5,421.3L564.3,436.1L566.1,444.1L567.8,436.3L569.6,420.9L571.3,415.1L573.1,425.9L574.8,441.1L576.6,442.5L578.4,427.9L580.1,415.2L581.9,420.7L583.6,437.7L585.4,443.8L587.2,430.6L588.9,415.9L590.7,420.3L592.4,437.6L594.2,442.9L595.9,428.5L597.7,415.9L599.5,424.0L601.2,440.1L603.0,439.2L604.7,423.3L606.5,418.0L608.2,431.2L610.0,440.8L611.8,431.5L613.5,419.8L615.3,425.0L617.0,437.1L618.8,435.3L620.6,424.0L622.3,423.3L624.1,433.1L625.8,435.5L627.6,427.3L629.3,424.1L631.1,430.6L632.9,434.1L634.6,429.0L636.4,425.7L638.1,429.6L639.9,432.6L641.7,429.5L643.4,427.0L645.2,429.4L646.9,431.4L648.7,429.6L650.4,428.0L652.2,429.5L654.0,430.6L655.7,429.5L657.5,428.6L659.2,429.6L661.0,430.2L662.7,429.4L664.5,429.0L666.3,429.7L668.0,429.9L669.8,429.3L671.5,429.3L673.3,429.7L675.1,429.6L676.8,429.4L678.6,429.4L680.3,429.6L682.1,429.5L683.8,429.4L685.6,429.5L687.4,429.6L689.1,429.5L690.9,429.4L692.6,429.5L694.4,429.5L696.2,429.5L697.9,429.5L699.7,429.5L701.4,429.5L703.2,429.5L704.9,429.5L706.7,429.5L708.5,429.5L710.2,429.5L712.0,429.5L713.7,429.5L715.5,429.5L717.2,429.5L719.0,429.5L720.8,429.5L722.5,429.5L724.3,429.5L726.0,429.5L727.8,415.3L729.6,440.6L731.3,429.3L733.1,418.7L734.8,443.9L736.6,420.9L738.3,426.9L740.1,441.4L741.9,415.3L743.6,437.8L745.4,431.8L747.1,417.7L748.9,444.0L750.6,419.9L752.4,430.1L754.2,437.6L755.9,415.5L757.7,443.7L759.4,422.8L761.2,424.8L763.0,440.1L764.7,422.5L766.5,429.7L768.2,431.5L770.0,429.5L771.7,428.4L773.5,429.4L775.3,430.2L777.0,429.6L778.8,429.1L780.5,429.4L782.3,429.8L784.0,429.6L785.8,429.3L787.6,429.5L789.3,429.6L791.1,429.5L792.8,429.5L794.6,429.5L796.4,429.5L798.1,429.5L799.9,429.5L801.6,429.5L803.4,429.5L805.1,429.5L806.9,429.5L808.7,429.5L810.4,429.5L812.2,429.5L813.9,429.5L815.7,429.5L817.5,429.5L819.2,429.5L821.0,429.5L822.7,429.5L824.5,429.5L826.2,429.5L828.0,429.5L829.8,429.5L831.5,429.5L833.3,429.5L835.0,429.5L836.8,429.5L838.5,429.5L840.3,429.5L842.1,429.5L843.8,429.5L845.6,429.5L847.3,429.5L849.1,429.5L850.9,429.5L852.6,429.5L854.4,429.5L856.1,429.5L857.9,429.5L859.6,429.5L861.4,429.5L863.2,429.5L864.9,429.5L866.7,429.5L868.4,429.5L870.2,429.5L872.0,429.5L873.7,429.5L875.5,429.5L877.2,429.5L879.0,429.5L880.7,429.5L882.5,429.5L884.3,429.5L886.0,429.5L887.8,429.5L889.5,429.5L891.3,429.5L893.0,429.5L894.8,429.5L896.6,429.5L898.3,429.5L900.1,429.5L901.8,429.5L903.6,429.5L905.4,429.5L907.1,429.5L908.9,429.5L910.6,429.5L912.4,429.5L914.1,429.5L915.9,429.6L917.7,429.5L919.4,429.4L921.2,429.5L922.9,429.6L924.7,429.6L926.4,429.4L928.2,429.3L930.0,429.5L931.7,429.8L933.5,429.6L935.2,429.2L937.0,429.3L938.8,429.9L940.5,430.0L942.3,429.2L944.0,428.8L945.8,429.7L947.5,430.5L949.3,429.6L951.1,428.2L952.8,429.1L954.6,431.1L956.3,430.4L958.1,427.7L959.9,428.0L961.6,431.5L963.4,431.7L965.1,427.3L966.9,426.4L968.6,431.8L970.4,433.5L972.2,427.0L973.9,424.5L975.7,432.2L977.4,435.5L979.2,426.5L980.9,422.6L982.7,433.0L984.5,437.3L986.2,425.2L988.0,421.1L989.7,435.0L991.5,438.2L993.3,422.4L995.0,421.1L996.8,438.6L998.5,436.8L1000.3,418.3L1002.0,424.4L1003.8,442.5L1005.6,431.3L1007.3,415.5L1009.1,432.2L1010.8,442.9L1012.6,421.8L1014.3,418.9L1016.1,441.7L1017.9,434.7L1019.6,414.8L1021.4,431.5L1023.1,443.1L1024.9,420.1L1026.7,421.3L1028.4,443.7L1030.2,428.8L1031.9,415.9L1033.7,439.3L1035.4,436.2L1037.2,415.0L1039.0,433.6L1040.7,440.7L1042.5,416.6L1044.2,429.0L1046.0,442.8L1047.8,418.6L1049.5,426.0L1051.3,443.6L1053.0,419.9L1054.8,424.6L1056.5,443.8L1058.3,420.1L1060.1,424.9L1061.8,443.6L1063.6,419.1L1065.3,426.7L1067.1,442.9L1068.8,417.3L1070.6,430.2L1072.4,440.8L1074.1,415.5L1075.9,435.2L1077.6,436.4L1079.4,415.3L1081.2,429.5L1082.9,429.5L1084.7,429.5L1086.4,429.5L1088.2,429.5L1089.9,429.5L1091.7,429.5L1093.5,429.5L1095.2,429.5L1097.0,429.5L1098.7,429.5L1100.5,429.4L1102.2,429.5L1104.0,429.6L1105.8,429.6L1107.5,429.4L1109.3,429.4L1111.0,429.7L1112.8,429.8L1114.6,429.2L1116.3,428.4L1118.1,428.4L1119.8,429.1L1121.6,429.8L1123.3,429.7L1125.1,429.4L1126.9,429.4L1128.6,429.6L1130.4,429.6L1132.1,429.5L1133.9,429.4L1135.7,429.5L1137.4,429.5L1139.2,429.5L1140.9,429.5L1142.7,429.5L1144.4,429.5L1146.2,429.5L1148.0,429.5L1149.7,429.5L1151.5,429.5L1153.2,429.5L1155.0,429.5L1156.7,429.5L1158.5,429.5L1160.3,429.5L1162.0,429.5L1163.8,429.5L1165.5,429.5L1167.3,429.5L1169.1,429.5L1170.8,429.5L1172.6,429.5L1174.3,429.5L1176.1,429.5L1177.8,429.5L1179.6,429.5"/>
<path d="M300.6,470.5L302.4,470.5L304.1,470.5L305.9,470.5L307.6,470.5L309.4,470.5L311.1,470.5L312.9,470.5L314.7,470.5L316.4,470.5L318.2,470.5L319.9,470.5L321.7,470.5L323.5,470.5L325.2,470.5L327.0,470.5L328.7,470.5L330.5,470.5L332.2,470.5L334.0,470.5L335.8,470.5L337.5,470.5L339.3,470.5L341.0,470.5L342.8,470.5L344.6,470.5L346.3,470.5L348.1,470.5L349.8,470.5L351.6,470.5L353.3,470.5L355.1,470.5L356.9,470.5L358.6,470.5L360.4,470.5L362.1,470.5L363.9,470.5L365.6,470.5L367.4,470.5L369.2,470.5L370.9,470.5L372.7,470.5L374.4,470.5L376.2,470.5L378.0,470.5L379.7,470.5L381.5,470.5L383.2,470.5L385.0,470.5L386.7,470.6L388.5,470.5L390.3,470.4L392.0,470.5L393.8,470.7L395.5,470.5L397.3,470.2L399.0,470.4L400.8,470.9L402.6,470.7L404.3,469.9L406.1,470.2L407.8,471.6L409.6,471.3L411.4,466.7L413.1,459.8L414.9,455.2L416.6,454.9L418.4,456.3L420.1,456.6L421.9,455.9L423.7,455.8L425.4,456.5L427.2,457.0L428.9,457.3L430.7,457.9L432.5,459.1L434.2,460.5L436.0,462.1L437.7,464.0L439.5,466.4L441.2,469.1L443.0,472.0L444.8,475.0L446.5,477.9L448.3,480.7L450.0,482.9L451.8,484.4L453.5,485.0L455.3,484.5L457.1,482.6L458.8,479.6L460.6,475.5L462.3,470.6L464.1,465.6L465.9,461.1L467.6,457.7L469.4,456.1L471.1,456.7L472.9,459.6L474.6,464.5L476.4,470.7L478.2,477.1L479.9,482.2L481.7,484.8L483.4,484.2L485.2,480.2L486.9,473.6L488.7,466.1L490.5,459.6L492.2,456.2L494.0,457.1L495.7,462.4L497.5,470.5L499.3,478.8L501.0,484.2L502.8,484.4L504.5,479.2L506.3,470.3L508.0,461.4L509.8,456.3L511.6,457.7L513.3,465.1L515.1,475.3L516.8,483.2L518.6,484.6L520.4,478.3L522.1,467.6L523.9,458.4L525.6,456.3L527.4,462.8L529.1,474.3L530.9,483.4L532.7,484.0L534.4,475.4L536.2,463.2L537.9,456.2L539.7,459.8L541.4,471.6L543.2,482.7L545.0,484.1L546.7,474.3L548.5,461.2L550.2,456.1L552.0,463.7L553.8,477.5L555.5,485.0L557.3,478.7L559.0,464.4L560.8,456.0L562.5,462.3L564.3,477.1L566.1,485.1L567.8,477.3L569.6,461.9L571.3,456.1L573.1,466.9L574.8,482.1L576.6,483.5L578.4,468.9L580.1,456.2L581.9,461.7L583.6,478.7L585.4,484.8L587.2,471.6L588.9,456.9L590.7,461.3L592.4,478.6L594.2,483.9L595.9,469.5L597.7,456.9L599.5,465.0L601.2,481.1L603.0,480.2L604.7,464.3L606.5,459.0L608.2,472.2L610.0,481.8L611.8,472.5L613.5,460.8L615.3,466.0L617.0,478.1L618.8,476.3L620.6,465.0L622.3,464.3L624.1,474.1L625.8,476.5L627.6,468.3L629.3,465.1L631.1,471.6L632.9,475.1L634.6,470.0L636.4,466.7L638.1,470.6L639.9,473.6L641.7,470.5L643.4,468.0L645.2,470.4L646.9,472.4L648.7,470.6L650.4,469.0L652.2,470.5L654.0,471.6L655.7,470.5L657.5,469.6L659.2,470.6L661.0,471.2L662.7,470.4L664.5,470.0L666.3,470.7L668.0,470.9L669.8,470.3L671.5,470.3L673.3,470.7L675.1,470.6L676.8,470.4L678.6,470.4L680.3,470.6L682.1,470.5L683.8,470.4L685.6,470.5L687.4,470.6L689.1,470.5L690.9,470.4L692.6,470.5L694.4,470.5L696.2,470.5L697.9,470.5L699.7,470.5L701.4,470.5L703.2,470.5L704.9,470.5L706.7,470.5L708.5,470.5L710.2,470.5L712.0,470.5L713.7,470.5L715.5,470.5L717.2,470.5L719.0,470.5L720.8,470.5L722.5,470.5L724.3,470.5L726.0,470.5L727.8,456.3L729.6,481.6L731.3,470.3L733.1,459.7L734.8,484.9L736.6,461.9L738.3,467.9L740.1,482.4L741.9,456.3L743.6,478.8L745.4,472.8L747.1,458.7L748.9,485.0L750.6,460.9L752.4,471.1L754.2,478.6L755.9,456.5L757.7,484.7L759.4,463.8L761.2,465.8L763.0,481.1L764.7,463.5L766.5,470.7L768.2,472.5L770.0,470.5L771.7,469.4L773.5,470.4L775.3,471.2L777.0,470.6L778.8,470.1L780.5,470.4L782.3,470.8L784.0,470.6L785.8,470.3L787.6,470.5L789.3,470.6L791.1,470.5L792.8,470.5L794.6,470.5L796.4,470.5L798.1,470.5L799.9,470.5L801.6,470.5L803.4,470.5L805.1,470.5L806.9,470.5L808.7,470.5L810.4,470.5L812.2,470.5L813.9,470.5L815.7,470.5L817.5,470.5L819.2,470.5L821.0,470.5L822.7,470.5L824.5,470.5L826.2,470.5L828.0,470.5L829.8,470.5L831.5,470.5L833.3,470.5L835.0,470.5L836.8,470.5L838.5,470.5L840.3,470.5L842.1,470.5L843.8,470.5L845.6,470.5L847.3,470.5L849.1,470.5L850.9,470.5L852.6,470.5L854.4,470.5L856.1,470.5L857.9,470.5L859.6,470.5L861.4,470.5L863.2,470.5L864.9,470.5L866.7,470.5L868.4,470.5L870.2,470.5L872.0,470.5L873.7,470.5L875.5,470.5L877.2,470.5L879.0,470.5L880.7,470.5L882.5,470.5L884.3,470.5L886.0,470.5L887.8,470.5L889.5,470.5L891.3,470.5L893.0,470.5L894.8,470.5L896.6,470.5L898.3,470.5L900.1,470.5L901.8,470.5L903.6,470.5L905.4,470.5L907.1,470.5L908.9,470.5L910.6,470.5L912.4,470.5L914.1,470.5L915.9,470.6L917.7,470.5L919.4,470.4L921.2,470.5L922.9,470.6L924.7,470.6L926.4,470.4L928.2,470.3L930.0,470.5L931.7,470.8L933.5,470.6L935.2,470.2L937.0,470.3L938.8,470.9L940.5,471.0L942.3,470.2L944.0,469.8L945.8,470.7L947.5,471.5L949.3,470.6L951.1,469.2L952.8,470.1L954.6,472.1L956.3,471.4L958.1,468.7L959.9,469.0L961.6,472.5L963.4,472.7L965.1,468.3L966.9,467.4L968.6,472.8L970.4,474.5L972.2,468.0L973.9,465.5L975.7,473.2L977.4,476.5L979.2,467.5L980.9,463.6L982.7,474.0L984.5,478.3L986.2,466.2L988.0,462.1L989.7,476.0L991.5,479.2L993.3,463.4L995.0,462.1L996.8,479.6L998.5,477.8L1000.3,459.3L1002.0,465.4L1003.8,483.5L1005.6,472.3L1007.3,456.5L1009.1,473.2L1010.8,483.9L1012.6,462.8L1014.3,459.9L1016.1,482.7L1017.9,475.7L1019.6,455.8L1021.4,472.5L1023.1,484.1L1024.9,461.1L1026.7,462.3L1028.4,484.7L1030.2,469.8L1031.9,456.9L1033.7,480.3L1035.4,477.2L1037.2,456.0L1039.0,474.6L1040.7,481.7L1042.5,457.6L1044.2,470.0L1046.0,483.8L1047.8,459.6L1049.5,467.0L1051.3,484.6L1053.0,460.9L1054.8,465.6L1056.5,484.8L1058.3,461.1L1060.1,465.9L1061.8,484.6L1063.6,460.1L1065.3,467.7L1067.1,483.9L1068.8,458.3L1070.6,471.2L1072.4,481.8L1074.1,456.5L1075.9,476.2L1077.6,477.4L1079.4,456.3L1081.2,470.5L1082.9,470.5L1084.7,470.5L1086.4,470.5L1088.2,470.5L1089.9,470.5L1091.7,470.5L1093.5,470.5L1095.2,470.5L1097.0,470.5L1098.7,470.5L1100.5,470.4L1102.2,470.5L1104.0,470.6L1105.8,470.6L1107.5,470.4L1109.3,470.4L1111.0,470.7L1112.8,470.8L1114.6,470.2L1116.3,469.4L1118.1,469.4L1119.8,470.1L1121.6,470.8L1123.3,470.7L1125.1,470.4L1126.9,470.4L1128.6,470.6L1130.4,470.6L1132.1,470.5L1133.9,470.4L1135.7,470.5L1137.4,470.5L1139.2,470.5L1140.9,470.5L1142.7,470.5L1144.4,470.5L1146.2,470.5L1148.0,470.5L1149.7,470.5L1151.5,470.5L1153.2,470.5L1155.0,470.5L1156.7,470.5L1158.5,470.5L1160.3,470.5L1162.0,470.5L1163.8,470.5L1165.5,470.5L1167.3,470.5L1169.1,470.5L1170.8,470.5L1172.6,470.5L1174.3,470.5L1176.1,470.5L1177.8,470.5L1179.6,470.5"/>
<path d="M301,250.5 H376.5 V280.5 H652.5 V250.5 H727.5 V280.5 H1003.5 V250.5 H1079.5 V280.5 H1180" />
<path d="M301,321.5 H376.5 V291.5 H378.5 V321.5 H727.5 V291.5 H729.5 V321.5 H1079.5 V291.5 H1081.5 V321.5 H1180" stroke-width="1.2"/>
<path d="M1180,496.5 H303.5 Q301.8,503.5 301.2,511.5 Q301.8,519.5 303.5,526.5 H1180"/>
</g>
<text x="1185" y="229" font-family="Liberation Sans" font-weight="bold" font-size="12" fill="#e0e0e0">1b</text>
<text x="305" y="516" font-family="Liberation Sans" font-weight="bold" font-size="12" fill="#eee">0</text>
<rect x="410" y="122" width="3" height="447" fill="#ffff00" fill-opacity="0.7"/>
<rect x="393.5" y="569.5" width="39" height="14" fill="#000" stroke="#f0f000" stroke-width="1"/>
</svg>
<div class="lbl" style="top:135.5px;left:4px">Coeff</div>
<div class="tri" style="top:179.5px"></div>
<div class="lbl" style="top:176.5px;left:14px">Coeff In</div>
<div class="val" style="top:176.5px;letter-spacing:0.45px">0.317138671875</div>
<div class="tri" style="top:220.5px"></div>
<div class="lbl" style="top:217.5px;left:14px">Write Addr</div>
<div class="val" style="top:217.5px">14</div>
<div class="lbl" style="top:258.5px;left:14px">Write En</div>
<div class="val" style="top:258.5px">0</div>
<div class="lbl" style="top:299.5px;left:14px">Write Done</div>
<div class="val" style="top:299.5px">0</div>
<div class="lbl" style="top:340.5px;left:4px">Data</div>
<div class="tri" style="top:384.5px"></div>
<div class="lbl" style="top:381.5px;left:14px">Filter In</div>
<div class="val" style="top:381.5px">2b2b</div>
<div class="tri" style="top:425.5px"></div>
<div class="lbl" style="top:422.5px;left:14px">Filter Out</div>
<div class="val" style="top:422.5px">7e1f</div>
<div class="tri" style="top:466.5px"></div>
<div class="lbl" style="top:463.5px;left:14px">Ref Out</div>
<div class="val" style="top:463.5px">7e1f</div>
<div class="tri" style="top:507.5px"></div>
<div class="lbl" style="top:504.5px;left:14px">Error</div>
<div class="val" style="top:504.5px">0</div>
<div class="tl" style="left:272.0px">0 s</div>
<div class="tl" style="left:360.0px">50 s</div>
<div class="tl" style="left:448.0px">100 s</div>
<div class="tl" style="left:536.0px">150 s</div>
<div class="tl" style="left:624.0px">200 s</div>
<div class="tl" style="left:712.0px">250 s</div>
<div class="tl" style="left:800.0px">300 s</div>
<div class="tl" style="left:887.0px">350 s</div>
<div class="tl" style="left:975.0px">400 s</div>
<div class="tl" style="left:1063.0px">450 s</div>
<div class="tl" style="left:1151.0px">500 s</div>
<div class="abs" style="left:393px;top:570px;width:40px;text-align:center;font-size:12px;font-weight:bold;color:#f0f000;line-height:14px">63.0 s</div>
<div class="abs" style="left:130px;top:569px;width:65.5px;text-align:right;font-size:12px;font-weight:bold;color:#f0f000;line-height:16px;letter-spacing:-0.4px">Cursor 1</div>
<div class="abs" style="left:240px;top:569px;width:57px;text-align:right;font-size:12px;font-weight:bold;color:#f0f000;line-height:16px">63.0 s</div>
</body></html>
